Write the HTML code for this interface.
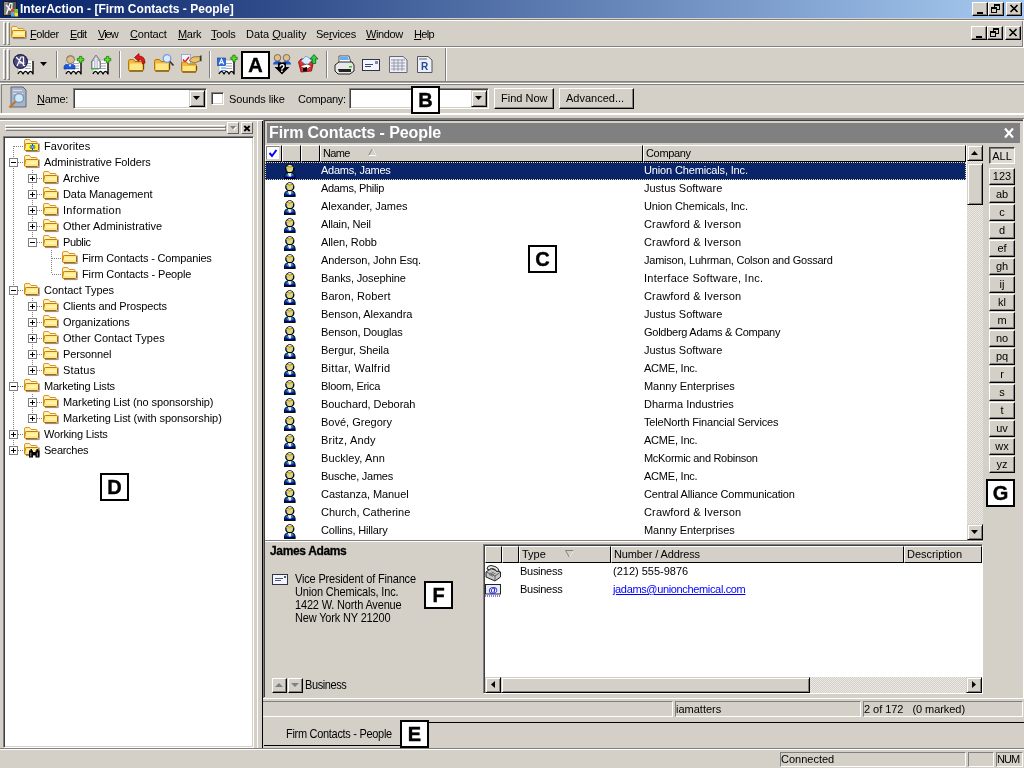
<!DOCTYPE html>
<html lang="en"><head><meta charset="utf-8"><title>InterAction - [Firm Contacts - People]</title>
<style>
*{box-sizing:border-box;margin:0;padding:0}
html,body{width:1024px;height:768px;overflow:hidden;background:#d4d0c8}
#root{position:absolute;left:0;top:0;width:1024px;height:768px;overflow:hidden;will-change:transform;opacity:0.999}
body{position:relative;font-family:"Liberation Sans",sans-serif;font-size:11px;color:#000;line-height:13px;letter-spacing:-0.1px}
.ab{position:absolute}
.t{position:absolute;white-space:nowrap;line-height:13px;height:13px}
u{text-decoration:underline}
.hl{position:absolute;height:1px}
.vl{position:absolute;width:1px}
.w{background:#fff}.g{background:#808080}.dk{background:#404040}.f{background:#d4d0c8}
.btn{position:absolute;background:#d4d0c8;border:1px solid;border-color:#fff #000 #000 #fff;box-shadow:inset -1px -1px 0 #808080}
.sbtn{position:absolute;background:#d4d0c8;border:1px solid;border-color:#d4d0c8 #000 #000 #d4d0c8;box-shadow:inset 1px 1px 0 #fff,inset -1px -1px 0 #808080}
.sunk{position:absolute;background:#fff;border:1px solid;border-color:#808080 #fff #fff #808080;box-shadow:inset 1px 1px 0 #404040,inset -1px -1px 0 #d4d0c8}
.lab{position:absolute;width:29px;height:28px;background:#fff;border:2px solid #000;font:bold 20px/25px "Liberation Sans",sans-serif;text-align:center;color:#000;letter-spacing:0;-webkit-text-stroke:0.4px #000}
.sb{position:absolute;background-color:#eae8e4;background-image:linear-gradient(45deg,#d4d0c8 25%,transparent 25%,transparent 75%,#d4d0c8 75%),linear-gradient(45deg,#d4d0c8 25%,transparent 25%,transparent 75%,#d4d0c8 75%);background-size:2px 2px;background-position:0 0,1px 1px}
.hdr{position:absolute;background:#d4d0c8;border:1px solid;border-color:#fff #000 #000 #fff;height:16px}
.ib{position:absolute;background:#d4d0c8;border:1px solid;border-color:#fff #000 #000 #fff;box-shadow:inset -1px -1px 0 #808080;width:25px;height:16px;text-align:center;font-size:11px;line-height:13px}
.st{position:absolute;border:1px solid;border-color:#808080 #fff #fff #808080;height:17px}
svg{position:absolute;overflow:visible}
</style></head>
<body><div id="root">
<div class="ab" style="left:0;top:0;width:1024px;height:18px;background:linear-gradient(90deg,#0a246a 0%,#0a246a 3%,#a6caf0 100%)"></div>
<svg style="left:3px;top:1px" width="16" height="16" viewBox="0 0 16 16"><rect x="0" y="0" width="14" height="15" fill="#1c1c1c"/><rect x="1" y="1" width="12" height="13" fill="#5a5a5a"/><rect x="1" y="1" width="4" height="13" fill="#8a8a8a"/><path d="M3.5 13 L7 2.5 L9 2.5 L8.5 13 M5 9 L10 9 M3 4 L11 12" stroke="#fff" stroke-width="1.2" fill="none"/><rect x="8" y="8" width="3.5" height="3.5" fill="#e8452c"/><rect x="11.5" y="8" width="3.5" height="3.5" fill="#6c3"/><rect x="8" y="11.5" width="3.5" height="4" fill="#4ae"/><rect x="11.5" y="11.5" width="3.5" height="4" fill="#fd3"/></svg>
<div class="t" style="left:20px;top:2px;color:#fff;font-weight:bold;font-size:12px;line-height:14px;height:14px;letter-spacing:0.027px">InterAction - [Firm Contacts - People]</div>
<div class="btn" style="left:972px;top:2px;width:16px;height:14px"><div class="ab" style="left:4px;top:9px;width:6px;height:2px;background:#000"></div></div>
<div class="btn" style="left:988px;top:2px;width:16px;height:14px"><div class="ab" style="left:5px;top:1px;width:6px;height:6px;border:1px solid #000;border-top-width:2px"></div><div class="ab" style="left:2px;top:4px;width:6px;height:6px;border:1px solid #000;border-top-width:2px;background:#d4d0c8"></div></div>
<div class="btn" style="left:1006px;top:2px;width:16px;height:14px"><svg style="left:3px;top:2px" width="8" height="7" viewBox="0 0 8 7"><path d="M0.5 0 L7.5 7 M7.5 0 L0.5 7" stroke="#000" stroke-width="1.6"/></svg></div>
<div class="hl g" style="left:0;top:19px;width:1024px"></div><div class="hl w" style="left:0;top:20px;width:1024px"></div>
<div class="hl g" style="left:0;top:46px;width:1024px"></div><div class="hl w" style="left:0;top:47px;width:1024px"></div>
<div class="ab" style="left:3px;top:22px;width:3px;height:23px;border:1px solid;border-color:#fff #808080 #808080 #fff"></div>
<div class="ab" style="left:7px;top:22px;width:3px;height:23px;border:1px solid;border-color:#fff #808080 #808080 #fff"></div>
<svg style="left:11px;top:26px" width="16" height="14" viewBox="0 0 16 14"><path d="M15.2 4.5 V12.6 H2" fill="none" stroke="#8a8a9a" stroke-width="1"/><path d="M0.5 11 V2 Q0.5 0.5 2 0.5 H5 Q6 0.5 6.5 1.5 L7 2.5 H12 Q13 2.5 13 3.5 V5 H0.5 Z" fill="#fff3c0" stroke="#dc9420" stroke-width="1"/><path d="M2.5 4.5 H13.5 Q14.5 4.5 14.5 5.5 V10.5 Q14.5 11.5 13.5 11.5 H2 Q0.5 11.5 0.5 10.5 L1.5 5.5 Q1.7 4.5 2.5 4.5 Z" fill="#ffe880" stroke="#c47c10" stroke-width="1"/><rect x="2.5" y="6.5" width="11" height="2.5" fill="#fff4b0"/><path d="M14.5 5.5 V11 M13 11.6 H2" fill="none" stroke="#a86408" stroke-width="1"/></svg>
<div class="t" style="left:30px;top:28px;;letter-spacing:-0.4px"><u>F</u>older</div>
<div class="t" style="left:70px;top:28px;;letter-spacing:-0.667px"><u>E</u>dit</div>
<div class="t" style="left:98px;top:28px;;letter-spacing:-1.0px"><u>V</u>iew</div>
<div class="t" style="left:130px;top:28px;;letter-spacing:-0.167px"><u>C</u>ontact</div>
<div class="t" style="left:178px;top:28px;;letter-spacing:-0.333px"><u>M</u>ark</div>
<div class="t" style="left:211px;top:28px;;letter-spacing:-0.25px"><u>T</u>ools</div>
<div class="t" style="left:246px;top:28px;;letter-spacing:0.0px">Data <u>Q</u>uality</div>
<div class="t" style="left:316px;top:28px;;letter-spacing:-0.286px">Se<u>r</u>vices</div>
<div class="t" style="left:366px;top:28px;;letter-spacing:-0.4px"><u>W</u>indow</div>
<div class="t" style="left:414px;top:28px;;letter-spacing:-0.667px"><u>H</u>elp</div>
<div class="btn" style="left:971px;top:26px;width:16px;height:14px"><div class="ab" style="left:4px;top:9px;width:6px;height:2px;background:#000"></div></div>
<div class="btn" style="left:987px;top:26px;width:16px;height:14px"><div class="ab" style="left:5px;top:1px;width:6px;height:6px;border:1px solid #000;border-top-width:2px"></div><div class="ab" style="left:2px;top:4px;width:6px;height:6px;border:1px solid #000;border-top-width:2px;background:#d4d0c8"></div></div>
<div class="btn" style="left:1005px;top:26px;width:16px;height:14px"><svg style="left:3px;top:2px" width="8" height="7" viewBox="0 0 8 7"><path d="M0.5 0 L7.5 7 M7.5 0 L0.5 7" stroke="#000" stroke-width="1.6"/></svg></div>
<div class="vl g" style="left:1022px;top:21px;height:25px"></div><div class="vl w" style="left:1023px;top:21px;height:26px"></div>
<div class="ab" style="left:3px;top:49px;width:3px;height:31px;border:1px solid;border-color:#fff #808080 #808080 #fff"></div>
<div class="ab" style="left:7px;top:49px;width:3px;height:31px;border:1px solid;border-color:#fff #808080 #808080 #fff"></div>
<div class="hl g" style="left:0;top:81px;width:1024px"></div><div class="hl" style="left:0;top:82px;width:1024px;background:#a8a49c"></div><div class="hl w" style="left:0;top:83px;width:1024px"></div>
<div class="vl g" style="left:445px;top:48px;height:33px"></div><div class="vl w" style="left:446px;top:48px;height:33px"></div>
<div class="vl g" style="left:56px;top:51px;height:27px"></div><div class="vl w" style="left:57px;top:51px;height:27px"></div>
<div class="vl g" style="left:119px;top:51px;height:27px"></div><div class="vl w" style="left:120px;top:51px;height:27px"></div>
<div class="vl g" style="left:209px;top:51px;height:27px"></div><div class="vl w" style="left:210px;top:51px;height:27px"></div>
<div class="vl g" style="left:326px;top:51px;height:27px"></div><div class="vl w" style="left:327px;top:51px;height:27px"></div>
<svg style="left:13px;top:54px" width="21" height="21" viewBox="0 0 21 21"><path d="M5 6 L20 6 L20 20 q-1.25 -2.6 -2.50 -2.6 q-1.25 0 -2.50 2.6 q-1.25 -2.6 -2.50 -2.6 q-1.25 0 -2.50 2.6 q-1.25 -2.6 -2.50 -2.6 q-1.25 0 -2.50 2.6 Z" fill="#fff" stroke="#b0b0b0" stroke-width="0.8"/><path d="M20 7 L20 20 q-1.25 -2.6 -2.50 -2.6 q-1.25 0 -2.50 2.6 q-1.25 -2.6 -2.50 -2.6 q-1.25 0 -2.50 2.6 q-1.25 -2.6 -2.50 -2.6 q-1.25 0 -2.50 2.6" fill="none" stroke="#000" stroke-width="1.3" stroke-linejoin="round"/><rect x="12" y="9.0" width="6" height="1" fill="#aab"/><rect x="12" y="11.5" width="6" height="1" fill="#aab"/><rect x="12" y="14.0" width="6" height="1" fill="#aab"/><circle cx="7.5" cy="7.5" r="7.5" fill="#1c1c3a"/><circle cx="7.5" cy="7.5" r="6.3" fill="#4a4a86"/><path d="M4 12 L8 3 L10.5 3 L10.5 12 M6 9 L11.5 9 M3 3 L12 12" stroke="#fff" stroke-width="1.2" fill="none"/></svg>
<svg style="left:40px;top:62px" width="8" height="4" viewBox="0 0 8 4"><path d="M0 0 L7 0 L3.5 4 Z" fill="#000"/></svg>
<svg style="left:64px;top:55px" width="21" height="20" viewBox="0 0 21 20"><path d="M2 5 L17 5 L17 19 q-1.25 -2.6 -2.50 -2.6 q-1.25 0 -2.50 2.6 q-1.25 -2.6 -2.50 -2.6 q-1.25 0 -2.50 2.6 q-1.25 -2.6 -2.50 -2.6 q-1.25 0 -2.50 2.6 Z" fill="#fff" stroke="#b0b0b0" stroke-width="0.8"/><path d="M17 6 L17 19 q-1.25 -2.6 -2.50 -2.6 q-1.25 0 -2.50 2.6 q-1.25 -2.6 -2.50 -2.6 q-1.25 0 -2.50 2.6 q-1.25 -2.6 -2.50 -2.6 q-1.25 0 -2.50 2.6" fill="none" stroke="#000" stroke-width="1.3" stroke-linejoin="round"/><rect x="9" y="8.0" width="6" height="1" fill="#aab"/><rect x="9" y="10.5" width="6" height="1" fill="#aab"/><rect x="9" y="13.0" width="6" height="1" fill="#aab"/><circle cx="6.5" cy="4.5" r="4" fill="#d8c090" stroke="#7a6a50" stroke-width="0.8"/><path d="M3 3 Q6.5 -1 10 3" fill="none" stroke="#9a8a6a" stroke-width="1.2"/><path d="M0 14 L0 12 Q0 9 6 9 Q11 9 11 12 L11 14 Z" fill="#1a5ae0" stroke="#0a2a8a" stroke-width="0.6"/><path d="M4.5 9.5 L6 12 L7.5 9.5 Z" fill="#fff"/><path d="M13.4 3.4 h2 v-2 h2.4 v2 h2 v2.4 h-2 v2 h-2.4 v-2 h-2 z" fill="#5be02a" stroke="#1a7a0a" stroke-width="0.8"/></svg>
<svg style="left:91px;top:55px" width="21" height="20" viewBox="0 0 21 20"><path d="M2 5 L17 5 L17 19 q-1.25 -2.6 -2.50 -2.6 q-1.25 0 -2.50 2.6 q-1.25 -2.6 -2.50 -2.6 q-1.25 0 -2.50 2.6 q-1.25 -2.6 -2.50 -2.6 q-1.25 0 -2.50 2.6 Z" fill="#fff" stroke="#b0b0b0" stroke-width="0.8"/><path d="M17 6 L17 19 q-1.25 -2.6 -2.50 -2.6 q-1.25 0 -2.50 2.6 q-1.25 -2.6 -2.50 -2.6 q-1.25 0 -2.50 2.6 q-1.25 -2.6 -2.50 -2.6 q-1.25 0 -2.50 2.6" fill="none" stroke="#000" stroke-width="1.3" stroke-linejoin="round"/><rect x="9" y="8.0" width="6" height="1" fill="#aab"/><rect x="9" y="10.5" width="6" height="1" fill="#aab"/><rect x="9" y="13.0" width="6" height="1" fill="#aab"/><path d="M0.5 13.5 L0.5 6 L2 6 L2 4 L5 0 L8 4 L8 6 L9.5 6 L9.5 13.5 Z" fill="#c4c4d0" stroke="#666a7a" stroke-width="0.8"/><path d="M2.5 6 v7 M5 3 v10 M7.5 6 v7" stroke="#fff" stroke-width="0.9"/><rect x="0" y="13" width="8" height="1.5" fill="#4a4"/><path d="M13.4 3.4 h2 v-2 h2.4 v2 h2 v2.4 h-2 v2 h-2.4 v-2 h-2 z" fill="#5be02a" stroke="#1a7a0a" stroke-width="0.8"/></svg>
<svg style="left:128px;top:53px" width="20" height="21" viewBox="0 0 20 21"><path d="M0.5 8.5 Q0.5 6.5 2 6.5 L5.5 6.5 L7 8.5 L14 8.5 Q15.5 8.5 15.5 10.0 L15.5 16.5 Q15.5 18.0 14 18.0 L2 18.0 Q0.5 18.0 0.5 16.5 Z" fill="#f0b840" stroke="#b87808" stroke-width="1"/><rect x="1.8" y="10.5" width="12.4" height="6.5" fill="#fde684"/><path d="M1.5 18.0 L15 18.0 M15.6 10.5 L15.6 16.5" stroke="#6a4808" stroke-width="1.1"/><path d="M6.5 4.5 L11 0.5 L11 3 Q17 3 17 10 L14.5 11 Q14.5 6.5 11 6.5 L11 8.5 Z" fill="#e01818" stroke="#800" stroke-width="0.7"/></svg>
<svg style="left:154px;top:53px" width="22" height="21" viewBox="0 0 22 21"><path d="M0.5 8.5 Q0.5 6.5 2 6.5 L5.5 6.5 L7 8.5 L14 8.5 Q15.5 8.5 15.5 10.0 L15.5 16.5 Q15.5 18.0 14 18.0 L2 18.0 Q0.5 18.0 0.5 16.5 Z" fill="#f0b840" stroke="#b87808" stroke-width="1"/><rect x="1.8" y="10.5" width="12.4" height="6.5" fill="#fde684"/><path d="M1.5 18.0 L15 18.0 M15.6 10.5 L15.6 16.5" stroke="#6a4808" stroke-width="1.1"/><circle cx="13" cy="5.5" r="3.8" fill="#d8ecff" stroke="#7a9ae0" stroke-width="1.3"/><path d="M15.8 8.5 L19.5 12.5" stroke="#333" stroke-width="1.7"/></svg>
<svg style="left:181px;top:52px" width="22" height="22" viewBox="0 0 22 22"><rect x="0.5" y="2.5" width="9" height="11" fill="#f0f4ff" stroke="#8aa0d0" stroke-width="0.8"/><path d="M2 7.5 L4 10 L8 5" stroke="#e01818" stroke-width="1.4" fill="none"/><path d="M8 8.5 L12 5 L19 4.5 L19 9 L13 11 Z" fill="#e9c46a" stroke="#7a5510" stroke-width="0.7"/><path d="M19 4 L20.5 3 L20.5 9.5 L19 9 Z" fill="#333"/><path d="M0.5 12 Q0.5 10 2 10 L5.5 10 L7 12 L14 12 Q15.5 12 15.5 13.5 L15.5 18.5 Q15.5 20.0 14 20.0 L2 20.0 Q0.5 20.0 0.5 18.5 Z" fill="#f0b840" stroke="#b87808" stroke-width="1"/><rect x="1.8" y="14" width="12.4" height="5.0" fill="#fde684"/><path d="M1.5 20.0 L15 20.0 M15.6 14 L15.6 18.5" stroke="#6a4808" stroke-width="1.1"/></svg>
<svg style="left:217px;top:54px" width="21" height="21" viewBox="0 0 21 21"><path d="M2 6 L17 6 L17 20 q-1.25 -2.6 -2.50 -2.6 q-1.25 0 -2.50 2.6 q-1.25 -2.6 -2.50 -2.6 q-1.25 0 -2.50 2.6 q-1.25 -2.6 -2.50 -2.6 q-1.25 0 -2.50 2.6 Z" fill="#fff" stroke="#b0b0b0" stroke-width="0.8"/><path d="M17 7 L17 20 q-1.25 -2.6 -2.50 -2.6 q-1.25 0 -2.50 2.6 q-1.25 -2.6 -2.50 -2.6 q-1.25 0 -2.50 2.6 q-1.25 -2.6 -2.50 -2.6 q-1.25 0 -2.50 2.6" fill="none" stroke="#000" stroke-width="1.3" stroke-linejoin="round"/><rect x="9" y="9.0" width="6" height="1" fill="#aab"/><rect x="9" y="11.5" width="6" height="1" fill="#aab"/><rect x="9" y="14.0" width="6" height="1" fill="#aab"/><rect x="0.5" y="4" width="8" height="7.5" fill="#2a6fdf" stroke="#0a3a9a" stroke-width="0.6"/><path d="M2.3 10.3 L4.5 5.2 L6.7 10.3 M3.2 8.6 L5.8 8.6" stroke="#fff" stroke-width="1.1" fill="none"/><rect x="4" y="13.5" width="5" height="1" fill="#39f"/><rect x="4" y="16" width="5" height="1" fill="#39f"/><path d="M13.8 3.2 h2 v-2 h2.4 v2 h2 v2.4 h-2 v2 h-2.4 v-2 h-2 z" fill="#5be02a" stroke="#1a7a0a" stroke-width="0.8"/></svg>
<svg style="left:273px;top:54px" width="19" height="21" viewBox="0 0 19 21"><circle cx="4.5" cy="3.8" r="3.3" fill="#e0c088" stroke="#654" stroke-width="0.8"/><circle cx="13.5" cy="3.8" r="3.3" fill="#e0c088" stroke="#654" stroke-width="0.8"/><path d="M0 10.5 Q0 7 4.5 7 Q9 7 9 10.5 Z" fill="#1a5ae0"/><path d="M9 10.5 Q9 7 13.5 7 Q18 7 18 10.5 Z" fill="#1a5ae0"/><path d="M5 8.5 L13 8.5 L13 13 L16.5 13 L9 20.5 L1.5 13 L5 13 Z" fill="#000"/><text x="9" y="17.5" font-family="Liberation Sans,sans-serif" font-size="10" font-weight="bold" fill="#fff" text-anchor="middle">?</text></svg>
<svg style="left:298px;top:54px" width="21" height="21" viewBox="0 0 21 21"><path d="M0.5 8 L3 5 L8 5 L9 7 L13 7 L15 10 L13.5 17 L3 18 Z" fill="#e03030" stroke="#800" stroke-width="0.8"/><path d="M3 7 L8 2 L14 6 L9 11.5 Z" fill="#d8ecff" stroke="#68a" stroke-width="0.7"/><path d="M2 12 L9 10 L14 12 L8 15.5 Z" fill="#fff" stroke="#600" stroke-width="0.6"/><path d="M5 14 L9 13 L9 17 L5 17.5 Z" fill="#000"/><path d="M16 0.5 L20 5 L17.7 5 L17.7 9.5 L14.3 9.5 L14.3 5 L12 5 Z" fill="#2fd02f" stroke="#063" stroke-width="0.8"/></svg>
<svg style="left:334px;top:55px" width="21" height="20" viewBox="0 0 21 20"><path d="M5 1 L15 1 L17 8 L5 8 Z" fill="#fff" stroke="#333" stroke-width="0.8"/><path d="M6 2 L14 2 L15 5 L6 5 Z" fill="#5ab0ff"/><path d="M1 10 L5 7 L18 7 L20 10 L20 16 L16 19 L4 19 L1 16 Z" fill="#e8e8e8" stroke="#222" stroke-width="1"/><path d="M4 14 L17 14 L17 17 L5 17 Z" fill="#222"/><rect x="15" y="11" width="3" height="1.5" fill="#2c2"/></svg>
<svg style="left:362px;top:59px" width="18" height="12" viewBox="0 0 18 12"><rect x="0.5" y="0.5" width="17" height="11" fill="#f4f6ff" stroke="#334" stroke-width="1"/><rect x="3" y="5" width="8" height="1" fill="#446"/><rect x="3" y="7" width="6" height="1" fill="#446"/><rect x="13" y="2" width="3" height="3" fill="#88a"/></svg>
<svg style="left:389px;top:56px" width="19" height="17" viewBox="0 0 19 17"><path d="M0.5 0.5 L14 0.5 L18 4 L18 16.5 L0.5 16.5 Z" fill="#eef0f8" stroke="#667" stroke-width="1"/><path d="M2 4 H16 M2 7 H16 M2 10 H16 M2 13 H16 M5 3 V15 M9 3 V15 M13 3 V15" stroke="#99a" stroke-width="1"/></svg>
<svg style="left:417px;top:56px" width="16" height="17" viewBox="0 0 16 17"><path d="M0.5 0.5 L11 0.5 L15 4 L15 16.5 L0.5 16.5 Z" fill="#eef0f8" stroke="#556" stroke-width="1"/><rect x="2" y="2" width="8" height="2" fill="#aab"/><text x="7.5" y="14" font-family="Liberation Sans,sans-serif" font-size="10" font-weight="bold" fill="#234a9a" text-anchor="middle">R</text></svg>
<div class="lab" style="left:241px;top:51px">A</div>
<div class="hl g" style="left:1px;top:84px;width:1023px"></div><div class="vl g" style="left:1px;top:84px;height:29px"></div>
<div class="hl w" style="left:0;top:113px;width:1024px;height:2px"></div>
<div class="hl g" style="left:0;top:118px;width:1024px"></div><div class="hl g" style="left:0;top:119px;width:263px"></div><div class="hl w" style="left:0;top:120px;width:263px"></div>
<svg style="left:8px;top:86px" width="20" height="23" viewBox="0 0 20 23"><path d="M3 1 L15 1 L18 4 L18 21 L3 21 Z" fill="#aab4c4" stroke="#5a6a84" stroke-width="1"/><rect x="5" y="4" width="9" height="1" fill="#dde"/><rect x="5" y="7" width="10" height="1" fill="#dde"/><circle cx="11" cy="12" r="4.6" fill="#cfe8f8" stroke="#7a9ab8" stroke-width="1.5"/><path d="M7.5 15.5 L1.5 21.5" stroke="#c07830" stroke-width="2.4"/></svg>
<div class="t" style="left:37px;top:93px;;letter-spacing:-0.25px"><u>N</u>ame:</div>
<div class="sunk" style="left:73px;top:88px;width:134px;height:21px"><div class="sbtn" style="right:1px;top:1px;width:16px;height:17px"><svg style="left:3px;top:5px" width="7" height="4" viewBox="0 0 7 4"><path d="M0 0 L7 0 L3.5 4 Z" fill="#000"/></svg></div></div>
<div class="sunk" style="left:211px;top:92px;width:13px;height:13px"></div>
<div class="t" style="left:229px;top:93px;;letter-spacing:-0.1px">Sounds like</div>
<div class="t" style="left:298px;top:93px;;letter-spacing:-0.286px">Company:</div>
<div class="sunk" style="left:349px;top:88px;width:140px;height:21px"><div class="sbtn" style="right:1px;top:1px;width:16px;height:17px"><svg style="left:3px;top:5px" width="7" height="4" viewBox="0 0 7 4"><path d="M0 0 L7 0 L3.5 4 Z" fill="#000"/></svg></div></div>
<div class="btn" style="left:494px;top:88px;width:60px;height:21px"></div>
<div class="t" style="left:501px;top:92px;;letter-spacing:0.0px">Find Now</div>
<div class="btn" style="left:559px;top:88px;width:75px;height:21px"></div>
<div class="t" style="left:566px;top:92px;;letter-spacing:0.0px">Advanced...</div>
<div class="lab" style="left:411px;top:86px">B</div>
<div class="ab" style="left:5px;top:125px;width:221px;height:3px;border:1px solid;border-color:#fff #808080 #808080 #fff"></div>
<div class="ab" style="left:5px;top:128px;width:221px;height:3px;border:1px solid;border-color:#fff #808080 #808080 #fff"></div>
<div class="btn" style="left:227px;top:122px;width:12px;height:12px;box-shadow:none;border-color:#fff #606060 #606060 #fff"><svg style="left:2px;top:3px" width="7" height="5" viewBox="0 0 7 5"><path d="M1 1 L7 1 L4 4.5 Z" fill="#fff"/><path d="M0 0 L6 0 L3 3.5 Z" fill="#808080"/></svg></div>
<div class="btn" style="left:241px;top:122px;width:12px;height:12px;box-shadow:none;border-color:#fff #606060 #606060 #fff"><svg style="left:2px;top:3px" width="6" height="5" viewBox="0 0 6 5"><path d="M0.3 0 L5.7 5 M5.7 0 L0.3 5" stroke="#000" stroke-width="1.9"/></svg></div>
<div class="ab" style="left:3px;top:136px;width:251px;height:612px;background:#fff;border:1px solid;border-color:#808080 #fff #fff #808080;box-shadow:inset 1px 1px 0 #404040,inset -1px -1px 0 #d4d0c8"></div>
<div class="vl w" style="left:257px;top:121px;height:627px"></div>
<div class="ab" style="left:13px;top:146px;width:1px;height:304px;background:repeating-linear-gradient(180deg,#808080 0 1px,transparent 1px 2px)"></div>
<div class="ab" style="left:32px;top:170px;width:1px;height:72px;background:repeating-linear-gradient(180deg,#808080 0 1px,transparent 1px 2px)"></div>
<div class="ab" style="left:51px;top:250px;width:1px;height:24px;background:repeating-linear-gradient(180deg,#808080 0 1px,transparent 1px 2px)"></div>
<div class="ab" style="left:32px;top:298px;width:1px;height:72px;background:repeating-linear-gradient(180deg,#808080 0 1px,transparent 1px 2px)"></div>
<div class="ab" style="left:32px;top:394px;width:1px;height:24px;background:repeating-linear-gradient(180deg,#808080 0 1px,transparent 1px 2px)"></div>
<div class="ab" style="left:14px;top:146px;width:10px;height:1px;background:repeating-linear-gradient(90deg,#808080 0 1px,transparent 1px 2px)"></div>
<svg style="left:24px;top:139px" width="16" height="14" viewBox="0 0 16 14"><path d="M15.2 4.5 V12.6 H2" fill="none" stroke="#8a8a9a" stroke-width="1"/><path d="M0.5 11 V2 Q0.5 0.5 2 0.5 H5 Q6 0.5 6.5 1.5 L7 2.5 H12 Q13 2.5 13 3.5 V5 H0.5 Z" fill="#fff3c0" stroke="#dc9420" stroke-width="1"/><path d="M2.5 4.5 H13.5 Q14.5 4.5 14.5 5.5 V10.5 Q14.5 11.5 13.5 11.5 H2 Q0.5 11.5 0.5 10.5 L1.5 5.5 Q1.7 4.5 2.5 4.5 Z" fill="#ffe880" stroke="#c47c10" stroke-width="1"/><rect x="2.5" y="6.5" width="11" height="2.5" fill="#fff4b0"/><path d="M14.5 5.5 V11 M13 11.6 H2" fill="none" stroke="#a86408" stroke-width="1"/><rect x="4" y="5.5" width="9" height="5.5" fill="#ff0"/><path d="M8.5 5 V11 M5.5 8 H11.5 M6.5 6 L10.5 10 M10.5 6 L6.5 10" stroke="#04f" stroke-width="1"/><circle cx="8.5" cy="8" r="0.8" fill="#cff"/></svg>
<div class="t" style="left:44px;top:140px;;letter-spacing:0.125px">Favorites</div>
<div class="ab" style="left:14px;top:162px;width:10px;height:1px;background:repeating-linear-gradient(90deg,#808080 0 1px,transparent 1px 2px)"></div>
<div class="ab" style="left:9px;top:158px;width:9px;height:9px;border:1px solid #808080;background:#fff"><div class="ab" style="left:1px;top:3px;width:5px;height:1px;background:#000"></div></div>
<svg style="left:24px;top:155px" width="16" height="14" viewBox="0 0 16 14"><path d="M15.2 4.5 V12.6 H2" fill="none" stroke="#8a8a9a" stroke-width="1"/><path d="M0.5 11 V2 Q0.5 0.5 2 0.5 H5 Q6 0.5 6.5 1.5 L7 2.5 H12 Q13 2.5 13 3.5 V5 H0.5 Z" fill="#fff3c0" stroke="#dc9420" stroke-width="1"/><path d="M2.5 4.5 H13.5 Q14.5 4.5 14.5 5.5 V10.5 Q14.5 11.5 13.5 11.5 H2 Q0.5 11.5 0.5 10.5 L1.5 5.5 Q1.7 4.5 2.5 4.5 Z" fill="#ffe880" stroke="#c47c10" stroke-width="1"/><rect x="2.5" y="6.5" width="11" height="2.5" fill="#fff4b0"/><path d="M14.5 5.5 V11 M13 11.6 H2" fill="none" stroke="#a86408" stroke-width="1"/></svg>
<div class="t" style="left:44px;top:156px;;letter-spacing:-0.095px">Administrative Folders</div>
<div class="ab" style="left:33px;top:178px;width:10px;height:1px;background:repeating-linear-gradient(90deg,#808080 0 1px,transparent 1px 2px)"></div>
<div class="ab" style="left:28px;top:174px;width:9px;height:9px;border:1px solid #808080;background:#fff"><div class="ab" style="left:1px;top:3px;width:5px;height:1px;background:#000"></div><div class="ab" style="left:3px;top:1px;width:1px;height:5px;background:#000"></div></div>
<svg style="left:43px;top:171px" width="16" height="14" viewBox="0 0 16 14"><path d="M15.2 4.5 V12.6 H2" fill="none" stroke="#8a8a9a" stroke-width="1"/><path d="M0.5 11 V2 Q0.5 0.5 2 0.5 H5 Q6 0.5 6.5 1.5 L7 2.5 H12 Q13 2.5 13 3.5 V5 H0.5 Z" fill="#fff3c0" stroke="#dc9420" stroke-width="1"/><path d="M2.5 4.5 H13.5 Q14.5 4.5 14.5 5.5 V10.5 Q14.5 11.5 13.5 11.5 H2 Q0.5 11.5 0.5 10.5 L1.5 5.5 Q1.7 4.5 2.5 4.5 Z" fill="#ffe880" stroke="#c47c10" stroke-width="1"/><rect x="2.5" y="6.5" width="11" height="2.5" fill="#fff4b0"/><path d="M14.5 5.5 V11 M13 11.6 H2" fill="none" stroke="#a86408" stroke-width="1"/></svg>
<div class="t" style="left:63px;top:172px;;letter-spacing:0.0px">Archive</div>
<div class="ab" style="left:33px;top:194px;width:10px;height:1px;background:repeating-linear-gradient(90deg,#808080 0 1px,transparent 1px 2px)"></div>
<div class="ab" style="left:28px;top:190px;width:9px;height:9px;border:1px solid #808080;background:#fff"><div class="ab" style="left:1px;top:3px;width:5px;height:1px;background:#000"></div><div class="ab" style="left:3px;top:1px;width:1px;height:5px;background:#000"></div></div>
<svg style="left:43px;top:187px" width="16" height="14" viewBox="0 0 16 14"><path d="M15.2 4.5 V12.6 H2" fill="none" stroke="#8a8a9a" stroke-width="1"/><path d="M0.5 11 V2 Q0.5 0.5 2 0.5 H5 Q6 0.5 6.5 1.5 L7 2.5 H12 Q13 2.5 13 3.5 V5 H0.5 Z" fill="#fff3c0" stroke="#dc9420" stroke-width="1"/><path d="M2.5 4.5 H13.5 Q14.5 4.5 14.5 5.5 V10.5 Q14.5 11.5 13.5 11.5 H2 Q0.5 11.5 0.5 10.5 L1.5 5.5 Q1.7 4.5 2.5 4.5 Z" fill="#ffe880" stroke="#c47c10" stroke-width="1"/><rect x="2.5" y="6.5" width="11" height="2.5" fill="#fff4b0"/><path d="M14.5 5.5 V11 M13 11.6 H2" fill="none" stroke="#a86408" stroke-width="1"/></svg>
<div class="t" style="left:63px;top:188px;;letter-spacing:-0.071px">Data Management</div>
<div class="ab" style="left:33px;top:210px;width:10px;height:1px;background:repeating-linear-gradient(90deg,#808080 0 1px,transparent 1px 2px)"></div>
<div class="ab" style="left:28px;top:206px;width:9px;height:9px;border:1px solid #808080;background:#fff"><div class="ab" style="left:1px;top:3px;width:5px;height:1px;background:#000"></div><div class="ab" style="left:3px;top:1px;width:1px;height:5px;background:#000"></div></div>
<svg style="left:43px;top:203px" width="16" height="14" viewBox="0 0 16 14"><path d="M15.2 4.5 V12.6 H2" fill="none" stroke="#8a8a9a" stroke-width="1"/><path d="M0.5 11 V2 Q0.5 0.5 2 0.5 H5 Q6 0.5 6.5 1.5 L7 2.5 H12 Q13 2.5 13 3.5 V5 H0.5 Z" fill="#fff3c0" stroke="#dc9420" stroke-width="1"/><path d="M2.5 4.5 H13.5 Q14.5 4.5 14.5 5.5 V10.5 Q14.5 11.5 13.5 11.5 H2 Q0.5 11.5 0.5 10.5 L1.5 5.5 Q1.7 4.5 2.5 4.5 Z" fill="#ffe880" stroke="#c47c10" stroke-width="1"/><rect x="2.5" y="6.5" width="11" height="2.5" fill="#fff4b0"/><path d="M14.5 5.5 V11 M13 11.6 H2" fill="none" stroke="#a86408" stroke-width="1"/></svg>
<div class="t" style="left:63px;top:204px;;letter-spacing:0.3px">Information</div>
<div class="ab" style="left:33px;top:226px;width:10px;height:1px;background:repeating-linear-gradient(90deg,#808080 0 1px,transparent 1px 2px)"></div>
<div class="ab" style="left:28px;top:222px;width:9px;height:9px;border:1px solid #808080;background:#fff"><div class="ab" style="left:1px;top:3px;width:5px;height:1px;background:#000"></div><div class="ab" style="left:3px;top:1px;width:1px;height:5px;background:#000"></div></div>
<svg style="left:43px;top:219px" width="16" height="14" viewBox="0 0 16 14"><path d="M15.2 4.5 V12.6 H2" fill="none" stroke="#8a8a9a" stroke-width="1"/><path d="M0.5 11 V2 Q0.5 0.5 2 0.5 H5 Q6 0.5 6.5 1.5 L7 2.5 H12 Q13 2.5 13 3.5 V5 H0.5 Z" fill="#fff3c0" stroke="#dc9420" stroke-width="1"/><path d="M2.5 4.5 H13.5 Q14.5 4.5 14.5 5.5 V10.5 Q14.5 11.5 13.5 11.5 H2 Q0.5 11.5 0.5 10.5 L1.5 5.5 Q1.7 4.5 2.5 4.5 Z" fill="#ffe880" stroke="#c47c10" stroke-width="1"/><rect x="2.5" y="6.5" width="11" height="2.5" fill="#fff4b0"/><path d="M14.5 5.5 V11 M13 11.6 H2" fill="none" stroke="#a86408" stroke-width="1"/></svg>
<div class="t" style="left:63px;top:220px;;letter-spacing:0.0px">Other Administrative</div>
<div class="ab" style="left:33px;top:242px;width:10px;height:1px;background:repeating-linear-gradient(90deg,#808080 0 1px,transparent 1px 2px)"></div>
<div class="ab" style="left:28px;top:238px;width:9px;height:9px;border:1px solid #808080;background:#fff"><div class="ab" style="left:1px;top:3px;width:5px;height:1px;background:#000"></div></div>
<svg style="left:43px;top:235px" width="16" height="14" viewBox="0 0 16 14"><path d="M15.2 4.5 V12.6 H2" fill="none" stroke="#8a8a9a" stroke-width="1"/><path d="M0.5 11 V2 Q0.5 0.5 2 0.5 H5 Q6 0.5 6.5 1.5 L7 2.5 H12 Q13 2.5 13 3.5 V5 H0.5 Z" fill="#fff3c0" stroke="#dc9420" stroke-width="1"/><path d="M2.5 4.5 H13.5 Q14.5 4.5 14.5 5.5 V10.5 Q14.5 11.5 13.5 11.5 H2 Q0.5 11.5 0.5 10.5 L1.5 5.5 Q1.7 4.5 2.5 4.5 Z" fill="#ffe880" stroke="#c47c10" stroke-width="1"/><rect x="2.5" y="6.5" width="11" height="2.5" fill="#fff4b0"/><path d="M14.5 5.5 V11 M13 11.6 H2" fill="none" stroke="#a86408" stroke-width="1"/></svg>
<div class="t" style="left:63px;top:236px;;letter-spacing:-0.4px">Public</div>
<div class="ab" style="left:52px;top:258px;width:10px;height:1px;background:repeating-linear-gradient(90deg,#808080 0 1px,transparent 1px 2px)"></div>
<svg style="left:62px;top:251px" width="16" height="14" viewBox="0 0 16 14"><path d="M15.2 4.5 V12.6 H2" fill="none" stroke="#8a8a9a" stroke-width="1"/><path d="M0.5 11 V2 Q0.5 0.5 2 0.5 H5 Q6 0.5 6.5 1.5 L7 2.5 H12 Q13 2.5 13 3.5 V5 H0.5 Z" fill="#fff3c0" stroke="#dc9420" stroke-width="1"/><path d="M2.5 4.5 H13.5 Q14.5 4.5 14.5 5.5 V10.5 Q14.5 11.5 13.5 11.5 H2 Q0.5 11.5 0.5 10.5 L1.5 5.5 Q1.7 4.5 2.5 4.5 Z" fill="#ffe880" stroke="#c47c10" stroke-width="1"/><rect x="2.5" y="6.5" width="11" height="2.5" fill="#fff4b0"/><path d="M14.5 5.5 V11 M13 11.6 H2" fill="none" stroke="#a86408" stroke-width="1"/></svg>
<div class="t" style="left:82px;top:252px;;letter-spacing:-0.167px">Firm Contacts - Companies</div>
<div class="ab" style="left:52px;top:274px;width:10px;height:1px;background:repeating-linear-gradient(90deg,#808080 0 1px,transparent 1px 2px)"></div>
<svg style="left:62px;top:267px" width="16" height="14" viewBox="0 0 16 14"><path d="M15.2 4.5 V12.6 H2" fill="none" stroke="#8a8a9a" stroke-width="1"/><path d="M0.5 11 V2 Q0.5 0.5 2 0.5 H5 Q6 0.5 6.5 1.5 L7 2.5 H12 Q13 2.5 13 3.5 V5 H0.5 Z" fill="#fff3c0" stroke="#dc9420" stroke-width="1"/><path d="M2.5 4.5 H13.5 Q14.5 4.5 14.5 5.5 V10.5 Q14.5 11.5 13.5 11.5 H2 Q0.5 11.5 0.5 10.5 L1.5 5.5 Q1.7 4.5 2.5 4.5 Z" fill="#ffe880" stroke="#c47c10" stroke-width="1"/><rect x="2.5" y="6.5" width="11" height="2.5" fill="#fff4b0"/><path d="M14.5 5.5 V11 M13 11.6 H2" fill="none" stroke="#a86408" stroke-width="1"/></svg>
<div class="t" style="left:82px;top:268px;;letter-spacing:-0.143px">Firm Contacts - People</div>
<div class="ab" style="left:14px;top:290px;width:10px;height:1px;background:repeating-linear-gradient(90deg,#808080 0 1px,transparent 1px 2px)"></div>
<div class="ab" style="left:9px;top:286px;width:9px;height:9px;border:1px solid #808080;background:#fff"><div class="ab" style="left:1px;top:3px;width:5px;height:1px;background:#000"></div></div>
<svg style="left:24px;top:283px" width="16" height="14" viewBox="0 0 16 14"><path d="M15.2 4.5 V12.6 H2" fill="none" stroke="#8a8a9a" stroke-width="1"/><path d="M0.5 11 V2 Q0.5 0.5 2 0.5 H5 Q6 0.5 6.5 1.5 L7 2.5 H12 Q13 2.5 13 3.5 V5 H0.5 Z" fill="#fff3c0" stroke="#dc9420" stroke-width="1"/><path d="M2.5 4.5 H13.5 Q14.5 4.5 14.5 5.5 V10.5 Q14.5 11.5 13.5 11.5 H2 Q0.5 11.5 0.5 10.5 L1.5 5.5 Q1.7 4.5 2.5 4.5 Z" fill="#ffe880" stroke="#c47c10" stroke-width="1"/><rect x="2.5" y="6.5" width="11" height="2.5" fill="#fff4b0"/><path d="M14.5 5.5 V11 M13 11.6 H2" fill="none" stroke="#a86408" stroke-width="1"/></svg>
<div class="t" style="left:44px;top:284px;;letter-spacing:0.0px">Contact Types</div>
<div class="ab" style="left:33px;top:306px;width:10px;height:1px;background:repeating-linear-gradient(90deg,#808080 0 1px,transparent 1px 2px)"></div>
<div class="ab" style="left:28px;top:302px;width:9px;height:9px;border:1px solid #808080;background:#fff"><div class="ab" style="left:1px;top:3px;width:5px;height:1px;background:#000"></div><div class="ab" style="left:3px;top:1px;width:1px;height:5px;background:#000"></div></div>
<svg style="left:43px;top:299px" width="16" height="14" viewBox="0 0 16 14"><path d="M15.2 4.5 V12.6 H2" fill="none" stroke="#8a8a9a" stroke-width="1"/><path d="M0.5 11 V2 Q0.5 0.5 2 0.5 H5 Q6 0.5 6.5 1.5 L7 2.5 H12 Q13 2.5 13 3.5 V5 H0.5 Z" fill="#fff3c0" stroke="#dc9420" stroke-width="1"/><path d="M2.5 4.5 H13.5 Q14.5 4.5 14.5 5.5 V10.5 Q14.5 11.5 13.5 11.5 H2 Q0.5 11.5 0.5 10.5 L1.5 5.5 Q1.7 4.5 2.5 4.5 Z" fill="#ffe880" stroke="#c47c10" stroke-width="1"/><rect x="2.5" y="6.5" width="11" height="2.5" fill="#fff4b0"/><path d="M14.5 5.5 V11 M13 11.6 H2" fill="none" stroke="#a86408" stroke-width="1"/></svg>
<div class="t" style="left:63px;top:300px;;letter-spacing:-0.15px">Clients and Prospects</div>
<div class="ab" style="left:33px;top:322px;width:10px;height:1px;background:repeating-linear-gradient(90deg,#808080 0 1px,transparent 1px 2px)"></div>
<div class="ab" style="left:28px;top:318px;width:9px;height:9px;border:1px solid #808080;background:#fff"><div class="ab" style="left:1px;top:3px;width:5px;height:1px;background:#000"></div><div class="ab" style="left:3px;top:1px;width:1px;height:5px;background:#000"></div></div>
<svg style="left:43px;top:315px" width="16" height="14" viewBox="0 0 16 14"><path d="M15.2 4.5 V12.6 H2" fill="none" stroke="#8a8a9a" stroke-width="1"/><path d="M0.5 11 V2 Q0.5 0.5 2 0.5 H5 Q6 0.5 6.5 1.5 L7 2.5 H12 Q13 2.5 13 3.5 V5 H0.5 Z" fill="#fff3c0" stroke="#dc9420" stroke-width="1"/><path d="M2.5 4.5 H13.5 Q14.5 4.5 14.5 5.5 V10.5 Q14.5 11.5 13.5 11.5 H2 Q0.5 11.5 0.5 10.5 L1.5 5.5 Q1.7 4.5 2.5 4.5 Z" fill="#ffe880" stroke="#c47c10" stroke-width="1"/><rect x="2.5" y="6.5" width="11" height="2.5" fill="#fff4b0"/><path d="M14.5 5.5 V11 M13 11.6 H2" fill="none" stroke="#a86408" stroke-width="1"/></svg>
<div class="t" style="left:63px;top:316px;;letter-spacing:-0.083px">Organizations</div>
<div class="ab" style="left:33px;top:338px;width:10px;height:1px;background:repeating-linear-gradient(90deg,#808080 0 1px,transparent 1px 2px)"></div>
<div class="ab" style="left:28px;top:334px;width:9px;height:9px;border:1px solid #808080;background:#fff"><div class="ab" style="left:1px;top:3px;width:5px;height:1px;background:#000"></div><div class="ab" style="left:3px;top:1px;width:1px;height:5px;background:#000"></div></div>
<svg style="left:43px;top:331px" width="16" height="14" viewBox="0 0 16 14"><path d="M15.2 4.5 V12.6 H2" fill="none" stroke="#8a8a9a" stroke-width="1"/><path d="M0.5 11 V2 Q0.5 0.5 2 0.5 H5 Q6 0.5 6.5 1.5 L7 2.5 H12 Q13 2.5 13 3.5 V5 H0.5 Z" fill="#fff3c0" stroke="#dc9420" stroke-width="1"/><path d="M2.5 4.5 H13.5 Q14.5 4.5 14.5 5.5 V10.5 Q14.5 11.5 13.5 11.5 H2 Q0.5 11.5 0.5 10.5 L1.5 5.5 Q1.7 4.5 2.5 4.5 Z" fill="#ffe880" stroke="#c47c10" stroke-width="1"/><rect x="2.5" y="6.5" width="11" height="2.5" fill="#fff4b0"/><path d="M14.5 5.5 V11 M13 11.6 H2" fill="none" stroke="#a86408" stroke-width="1"/></svg>
<div class="t" style="left:63px;top:332px;;letter-spacing:0.056px">Other Contact Types</div>
<div class="ab" style="left:33px;top:354px;width:10px;height:1px;background:repeating-linear-gradient(90deg,#808080 0 1px,transparent 1px 2px)"></div>
<div class="ab" style="left:28px;top:350px;width:9px;height:9px;border:1px solid #808080;background:#fff"><div class="ab" style="left:1px;top:3px;width:5px;height:1px;background:#000"></div><div class="ab" style="left:3px;top:1px;width:1px;height:5px;background:#000"></div></div>
<svg style="left:43px;top:347px" width="16" height="14" viewBox="0 0 16 14"><path d="M15.2 4.5 V12.6 H2" fill="none" stroke="#8a8a9a" stroke-width="1"/><path d="M0.5 11 V2 Q0.5 0.5 2 0.5 H5 Q6 0.5 6.5 1.5 L7 2.5 H12 Q13 2.5 13 3.5 V5 H0.5 Z" fill="#fff3c0" stroke="#dc9420" stroke-width="1"/><path d="M2.5 4.5 H13.5 Q14.5 4.5 14.5 5.5 V10.5 Q14.5 11.5 13.5 11.5 H2 Q0.5 11.5 0.5 10.5 L1.5 5.5 Q1.7 4.5 2.5 4.5 Z" fill="#ffe880" stroke="#c47c10" stroke-width="1"/><rect x="2.5" y="6.5" width="11" height="2.5" fill="#fff4b0"/><path d="M14.5 5.5 V11 M13 11.6 H2" fill="none" stroke="#a86408" stroke-width="1"/></svg>
<div class="t" style="left:63px;top:348px;;letter-spacing:-0.125px">Personnel</div>
<div class="ab" style="left:33px;top:370px;width:10px;height:1px;background:repeating-linear-gradient(90deg,#808080 0 1px,transparent 1px 2px)"></div>
<div class="ab" style="left:28px;top:366px;width:9px;height:9px;border:1px solid #808080;background:#fff"><div class="ab" style="left:1px;top:3px;width:5px;height:1px;background:#000"></div><div class="ab" style="left:3px;top:1px;width:1px;height:5px;background:#000"></div></div>
<svg style="left:43px;top:363px" width="16" height="14" viewBox="0 0 16 14"><path d="M15.2 4.5 V12.6 H2" fill="none" stroke="#8a8a9a" stroke-width="1"/><path d="M0.5 11 V2 Q0.5 0.5 2 0.5 H5 Q6 0.5 6.5 1.5 L7 2.5 H12 Q13 2.5 13 3.5 V5 H0.5 Z" fill="#fff3c0" stroke="#dc9420" stroke-width="1"/><path d="M2.5 4.5 H13.5 Q14.5 4.5 14.5 5.5 V10.5 Q14.5 11.5 13.5 11.5 H2 Q0.5 11.5 0.5 10.5 L1.5 5.5 Q1.7 4.5 2.5 4.5 Z" fill="#ffe880" stroke="#c47c10" stroke-width="1"/><rect x="2.5" y="6.5" width="11" height="2.5" fill="#fff4b0"/><path d="M14.5 5.5 V11 M13 11.6 H2" fill="none" stroke="#a86408" stroke-width="1"/></svg>
<div class="t" style="left:63px;top:364px;;letter-spacing:0.2px">Status</div>
<div class="ab" style="left:14px;top:386px;width:10px;height:1px;background:repeating-linear-gradient(90deg,#808080 0 1px,transparent 1px 2px)"></div>
<div class="ab" style="left:9px;top:382px;width:9px;height:9px;border:1px solid #808080;background:#fff"><div class="ab" style="left:1px;top:3px;width:5px;height:1px;background:#000"></div></div>
<svg style="left:24px;top:379px" width="16" height="14" viewBox="0 0 16 14"><path d="M15.2 4.5 V12.6 H2" fill="none" stroke="#8a8a9a" stroke-width="1"/><path d="M0.5 11 V2 Q0.5 0.5 2 0.5 H5 Q6 0.5 6.5 1.5 L7 2.5 H12 Q13 2.5 13 3.5 V5 H0.5 Z" fill="#fff3c0" stroke="#dc9420" stroke-width="1"/><path d="M2.5 4.5 H13.5 Q14.5 4.5 14.5 5.5 V10.5 Q14.5 11.5 13.5 11.5 H2 Q0.5 11.5 0.5 10.5 L1.5 5.5 Q1.7 4.5 2.5 4.5 Z" fill="#ffe880" stroke="#c47c10" stroke-width="1"/><rect x="2.5" y="6.5" width="11" height="2.5" fill="#fff4b0"/><path d="M14.5 5.5 V11 M13 11.6 H2" fill="none" stroke="#a86408" stroke-width="1"/></svg>
<div class="t" style="left:44px;top:380px;;letter-spacing:-0.214px">Marketing Lists</div>
<div class="ab" style="left:33px;top:402px;width:10px;height:1px;background:repeating-linear-gradient(90deg,#808080 0 1px,transparent 1px 2px)"></div>
<div class="ab" style="left:28px;top:398px;width:9px;height:9px;border:1px solid #808080;background:#fff"><div class="ab" style="left:1px;top:3px;width:5px;height:1px;background:#000"></div><div class="ab" style="left:3px;top:1px;width:1px;height:5px;background:#000"></div></div>
<svg style="left:43px;top:395px" width="16" height="14" viewBox="0 0 16 14"><path d="M15.2 4.5 V12.6 H2" fill="none" stroke="#8a8a9a" stroke-width="1"/><path d="M0.5 11 V2 Q0.5 0.5 2 0.5 H5 Q6 0.5 6.5 1.5 L7 2.5 H12 Q13 2.5 13 3.5 V5 H0.5 Z" fill="#fff3c0" stroke="#dc9420" stroke-width="1"/><path d="M2.5 4.5 H13.5 Q14.5 4.5 14.5 5.5 V10.5 Q14.5 11.5 13.5 11.5 H2 Q0.5 11.5 0.5 10.5 L1.5 5.5 Q1.7 4.5 2.5 4.5 Z" fill="#ffe880" stroke="#c47c10" stroke-width="1"/><rect x="2.5" y="6.5" width="11" height="2.5" fill="#fff4b0"/><path d="M14.5 5.5 V11 M13 11.6 H2" fill="none" stroke="#a86408" stroke-width="1"/></svg>
<div class="t" style="left:63px;top:396px;;letter-spacing:-0.1px">Marketing List (no sponsorship)</div>
<div class="ab" style="left:33px;top:418px;width:10px;height:1px;background:repeating-linear-gradient(90deg,#808080 0 1px,transparent 1px 2px)"></div>
<div class="ab" style="left:28px;top:414px;width:9px;height:9px;border:1px solid #808080;background:#fff"><div class="ab" style="left:1px;top:3px;width:5px;height:1px;background:#000"></div><div class="ab" style="left:3px;top:1px;width:1px;height:5px;background:#000"></div></div>
<svg style="left:43px;top:411px" width="16" height="14" viewBox="0 0 16 14"><path d="M15.2 4.5 V12.6 H2" fill="none" stroke="#8a8a9a" stroke-width="1"/><path d="M0.5 11 V2 Q0.5 0.5 2 0.5 H5 Q6 0.5 6.5 1.5 L7 2.5 H12 Q13 2.5 13 3.5 V5 H0.5 Z" fill="#fff3c0" stroke="#dc9420" stroke-width="1"/><path d="M2.5 4.5 H13.5 Q14.5 4.5 14.5 5.5 V10.5 Q14.5 11.5 13.5 11.5 H2 Q0.5 11.5 0.5 10.5 L1.5 5.5 Q1.7 4.5 2.5 4.5 Z" fill="#ffe880" stroke="#c47c10" stroke-width="1"/><rect x="2.5" y="6.5" width="11" height="2.5" fill="#fff4b0"/><path d="M14.5 5.5 V11 M13 11.6 H2" fill="none" stroke="#a86408" stroke-width="1"/></svg>
<div class="t" style="left:63px;top:412px;;letter-spacing:-0.062px">Marketing List (with sponsorship)</div>
<div class="ab" style="left:14px;top:434px;width:10px;height:1px;background:repeating-linear-gradient(90deg,#808080 0 1px,transparent 1px 2px)"></div>
<div class="ab" style="left:9px;top:430px;width:9px;height:9px;border:1px solid #808080;background:#fff"><div class="ab" style="left:1px;top:3px;width:5px;height:1px;background:#000"></div><div class="ab" style="left:3px;top:1px;width:1px;height:5px;background:#000"></div></div>
<svg style="left:24px;top:427px" width="16" height="14" viewBox="0 0 16 14"><path d="M15.2 4.5 V12.6 H2" fill="none" stroke="#8a8a9a" stroke-width="1"/><path d="M0.5 11 V2 Q0.5 0.5 2 0.5 H5 Q6 0.5 6.5 1.5 L7 2.5 H12 Q13 2.5 13 3.5 V5 H0.5 Z" fill="#fff3c0" stroke="#dc9420" stroke-width="1"/><path d="M2.5 4.5 H13.5 Q14.5 4.5 14.5 5.5 V10.5 Q14.5 11.5 13.5 11.5 H2 Q0.5 11.5 0.5 10.5 L1.5 5.5 Q1.7 4.5 2.5 4.5 Z" fill="#ffe880" stroke="#c47c10" stroke-width="1"/><rect x="2.5" y="6.5" width="11" height="2.5" fill="#fff4b0"/><path d="M14.5 5.5 V11 M13 11.6 H2" fill="none" stroke="#a86408" stroke-width="1"/></svg>
<div class="t" style="left:44px;top:428px;;letter-spacing:-0.167px">Working Lists</div>
<div class="ab" style="left:14px;top:450px;width:10px;height:1px;background:repeating-linear-gradient(90deg,#808080 0 1px,transparent 1px 2px)"></div>
<div class="ab" style="left:9px;top:446px;width:9px;height:9px;border:1px solid #808080;background:#fff"><div class="ab" style="left:1px;top:3px;width:5px;height:1px;background:#000"></div><div class="ab" style="left:3px;top:1px;width:1px;height:5px;background:#000"></div></div>
<svg style="left:24px;top:443px" width="16" height="14" viewBox="0 0 16 14"><path d="M15.2 4.5 V12.6 H2" fill="none" stroke="#8a8a9a" stroke-width="1"/><path d="M0.5 11 V2 Q0.5 0.5 2 0.5 H5 Q6 0.5 6.5 1.5 L7 2.5 H12 Q13 2.5 13 3.5 V5 H0.5 Z" fill="#fff3c0" stroke="#dc9420" stroke-width="1"/><path d="M2.5 4.5 H13.5 Q14.5 4.5 14.5 5.5 V10.5 Q14.5 11.5 13.5 11.5 H2 Q0.5 11.5 0.5 10.5 L1.5 5.5 Q1.7 4.5 2.5 4.5 Z" fill="#ffe880" stroke="#c47c10" stroke-width="1"/><rect x="2.5" y="6.5" width="11" height="2.5" fill="#fff4b0"/><path d="M14.5 5.5 V11 M13 11.6 H2" fill="none" stroke="#a86408" stroke-width="1"/><path d="M5 7.5 h4 v7 h-4 z M11.5 7.5 h4 v7 h-4 z M8 9 h4.5 v3 h-4.5 z M6.5 6 h1.5 v2 h-1.5 z M12.5 6 h1.5 v2 h-1.5 z" fill="#000"/><path d="M6.8 9.5 v4 M13.3 9.5 v4" stroke="#999" stroke-width="1"/></svg>
<div class="t" style="left:44px;top:444px;;letter-spacing:-0.286px">Searches</div>
<div class="lab" style="left:100px;top:473px">D</div>
<div class="hl g" style="left:263px;top:119px;width:761px"></div><div class="hl dk" style="left:264px;top:120px;width:759px"></div><div class="vl w" style="left:1023px;top:119px;height:580px;width:1px"></div>
<div class="vl" style="left:262px;top:121px;height:627px;width:1px;background:#000"></div><div class="vl g" style="left:263px;top:119px;height:579px"></div><div class="vl dk" style="left:264px;top:120px;height:577px"></div>
<div class="ab" style="left:267px;top:123px;width:753px;height:20px;background:#808080"></div>
<div class="t" style="left:269px;top:124px;color:#fff;font-weight:bold;font-size:16px;line-height:18px;height:18px;letter-spacing:-0.1px">Firm Contacts - People</div>
<svg style="left:1004px;top:128px" width="10" height="10" viewBox="0 0 10 10"><path d="M1 0.5 L9 9.5 M9 0.5 L1 9.5" stroke="#fff" stroke-width="2.2"/></svg>
<div class="ab w" style="left:265px;top:145px;width:702px;height:395px"></div>
<div class="hl g" style="left:265px;top:540px;width:718px"></div><div class="hl w" style="left:265px;top:541px;width:718px"></div>
<div class="hdr" style="left:265px;top:145px;width:17px;height:17px"></div>
<div class="hdr" style="left:282px;top:145px;width:19px;height:17px"></div>
<div class="hdr" style="left:301px;top:145px;width:19px;height:17px"></div>
<div class="hdr" style="left:320px;top:145px;width:323px;height:17px"></div>
<div class="t" style="left:323px;top:147px;;letter-spacing:-0.667px">Name</div>
<div class="hdr" style="left:643px;top:145px;width:323px;height:17px"></div>
<div class="t" style="left:646px;top:147px;;letter-spacing:-0.333px">Company</div>
<div class="ab" style="left:266px;top:146px;width:14px;height:14px;background:#fff;border:1px solid;border-color:#808080 #d4d0c8 #d4d0c8 #808080"></div>
<svg style="left:269px;top:149px" width="9" height="9" viewBox="0 0 9 9"><path d="M0.5 4 L3 7 L7.5 1" stroke="#00f" stroke-width="2" fill="none"/></svg>
<svg style="left:368px;top:148px" width="9" height="8" viewBox="0 0 9 8"><path d="M4.5 0.5 L0.5 7.5 L8.5 7.5 Z" fill="#d4d0c8" stroke="#808080" stroke-width="1"/><path d="M4.5 0.5 L8.5 7.5 L0.5 7.5" fill="none" stroke="#fff" stroke-width="1"/></svg>
<div class="ab" style="left:265px;top:162px;width:701px;height:18px;background:#0a246a;outline:1px dotted #e8d8a0;outline-offset:-1px"></div>
<svg style="left:284px;top:164px" width="12" height="15" viewBox="0 0 12 16" preserveAspectRatio="none"><path d="M0.5 14.2 L0.5 12.5 Q0.8 10 3.3 9.5 L8.2 9.5 Q10.7 10 11 12.5 L11 14.2 Z" fill="#1838a8" stroke="#000" stroke-width="0.9"/><path d="M4 9.6 L7.5 9.6 L6.9 13.6 L4.6 13.6 Z" fill="#fff"/><path d="M2.6 10.6 L4.4 13.2 M8.9 10.6 L7.1 13.2" stroke="#18a0a0" stroke-width="1.2" fill="none"/><rect x="0" y="13.6" width="11.6" height="1.4" fill="#000080"/><rect x="0" y="15" width="11.6" height="1" fill="#000"/><circle cx="5.8" cy="5.2" r="4" fill="#c6c6c6" stroke="#000" stroke-width="1.3"/><ellipse cx="5.8" cy="1.9" rx="2.4" ry="1.2" fill="#fff" stroke="#000" stroke-width="0.7"/><path d="M2.3 3.6 Q5.8 2.6 9.3 3.6" stroke="#e8d820" stroke-width="1.2" fill="none"/><path d="M4 5.8 L5.5 7.6 L8 4.4" stroke="#f4e820" stroke-width="1.1" fill="none"/></svg>
<div class="t" style="left:321px;top:164px;color:#fff;letter-spacing:-0.273px">Adams, James</div>
<div class="t" style="left:644px;top:164px;color:#fff;letter-spacing:-0.15px">Union Chemicals, Inc.</div>
<svg style="left:284px;top:182px" width="12" height="15" viewBox="0 0 12 16" preserveAspectRatio="none"><path d="M0.5 14.2 L0.5 12.5 Q0.8 10 3.3 9.5 L8.2 9.5 Q10.7 10 11 12.5 L11 14.2 Z" fill="#1838a8" stroke="#000" stroke-width="0.9"/><path d="M4 9.6 L7.5 9.6 L6.9 13.6 L4.6 13.6 Z" fill="#fff"/><path d="M2.6 10.6 L4.4 13.2 M8.9 10.6 L7.1 13.2" stroke="#18a0a0" stroke-width="1.2" fill="none"/><rect x="0" y="13.6" width="11.6" height="1.4" fill="#000080"/><rect x="0" y="15" width="11.6" height="1" fill="#000"/><circle cx="5.8" cy="5.2" r="4" fill="#c6c6c6" stroke="#000" stroke-width="1.3"/><ellipse cx="5.8" cy="1.9" rx="2.4" ry="1.2" fill="#fff" stroke="#000" stroke-width="0.7"/><path d="M2.3 3.6 Q5.8 2.6 9.3 3.6" stroke="#e8d820" stroke-width="1.2" fill="none"/><path d="M4 5.8 L5.5 7.6 L8 4.4" stroke="#f4e820" stroke-width="1.1" fill="none"/></svg>
<div class="t" style="left:321px;top:182px;;letter-spacing:-0.333px">Adams, Philip</div>
<div class="t" style="left:644px;top:182px;;letter-spacing:0.0px">Justus Software</div>
<svg style="left:284px;top:200px" width="12" height="15" viewBox="0 0 12 16" preserveAspectRatio="none"><path d="M0.5 14.2 L0.5 12.5 Q0.8 10 3.3 9.5 L8.2 9.5 Q10.7 10 11 12.5 L11 14.2 Z" fill="#1838a8" stroke="#000" stroke-width="0.9"/><path d="M4 9.6 L7.5 9.6 L6.9 13.6 L4.6 13.6 Z" fill="#fff"/><path d="M2.6 10.6 L4.4 13.2 M8.9 10.6 L7.1 13.2" stroke="#18a0a0" stroke-width="1.2" fill="none"/><rect x="0" y="13.6" width="11.6" height="1.4" fill="#000080"/><rect x="0" y="15" width="11.6" height="1" fill="#000"/><circle cx="5.8" cy="5.2" r="4" fill="#c6c6c6" stroke="#000" stroke-width="1.3"/><ellipse cx="5.8" cy="1.9" rx="2.4" ry="1.2" fill="#fff" stroke="#000" stroke-width="0.7"/><path d="M2.3 3.6 Q5.8 2.6 9.3 3.6" stroke="#e8d820" stroke-width="1.2" fill="none"/><path d="M4 5.8 L5.5 7.6 L8 4.4" stroke="#f4e820" stroke-width="1.1" fill="none"/></svg>
<div class="t" style="left:321px;top:200px;;letter-spacing:-0.067px">Alexander, James</div>
<div class="t" style="left:644px;top:200px;;letter-spacing:-0.15px">Union Chemicals, Inc.</div>
<svg style="left:284px;top:218px" width="12" height="15" viewBox="0 0 12 16" preserveAspectRatio="none"><path d="M0.5 14.2 L0.5 12.5 Q0.8 10 3.3 9.5 L8.2 9.5 Q10.7 10 11 12.5 L11 14.2 Z" fill="#1838a8" stroke="#000" stroke-width="0.9"/><path d="M4 9.6 L7.5 9.6 L6.9 13.6 L4.6 13.6 Z" fill="#fff"/><path d="M2.6 10.6 L4.4 13.2 M8.9 10.6 L7.1 13.2" stroke="#18a0a0" stroke-width="1.2" fill="none"/><rect x="0" y="13.6" width="11.6" height="1.4" fill="#000080"/><rect x="0" y="15" width="11.6" height="1" fill="#000"/><circle cx="5.8" cy="5.2" r="4" fill="#c6c6c6" stroke="#000" stroke-width="1.3"/><ellipse cx="5.8" cy="1.9" rx="2.4" ry="1.2" fill="#fff" stroke="#000" stroke-width="0.7"/><path d="M2.3 3.6 Q5.8 2.6 9.3 3.6" stroke="#e8d820" stroke-width="1.2" fill="none"/><path d="M4 5.8 L5.5 7.6 L8 4.4" stroke="#f4e820" stroke-width="1.1" fill="none"/></svg>
<div class="t" style="left:321px;top:218px;;letter-spacing:-0.182px">Allain, Neil</div>
<div class="t" style="left:644px;top:218px;;letter-spacing:0.176px">Crawford &amp; Iverson</div>
<svg style="left:284px;top:236px" width="12" height="15" viewBox="0 0 12 16" preserveAspectRatio="none"><path d="M0.5 14.2 L0.5 12.5 Q0.8 10 3.3 9.5 L8.2 9.5 Q10.7 10 11 12.5 L11 14.2 Z" fill="#1838a8" stroke="#000" stroke-width="0.9"/><path d="M4 9.6 L7.5 9.6 L6.9 13.6 L4.6 13.6 Z" fill="#fff"/><path d="M2.6 10.6 L4.4 13.2 M8.9 10.6 L7.1 13.2" stroke="#18a0a0" stroke-width="1.2" fill="none"/><rect x="0" y="13.6" width="11.6" height="1.4" fill="#000080"/><rect x="0" y="15" width="11.6" height="1" fill="#000"/><circle cx="5.8" cy="5.2" r="4" fill="#c6c6c6" stroke="#000" stroke-width="1.3"/><ellipse cx="5.8" cy="1.9" rx="2.4" ry="1.2" fill="#fff" stroke="#000" stroke-width="0.7"/><path d="M2.3 3.6 Q5.8 2.6 9.3 3.6" stroke="#e8d820" stroke-width="1.2" fill="none"/><path d="M4 5.8 L5.5 7.6 L8 4.4" stroke="#f4e820" stroke-width="1.1" fill="none"/></svg>
<div class="t" style="left:321px;top:236px;;letter-spacing:-0.1px">Allen, Robb</div>
<div class="t" style="left:644px;top:236px;;letter-spacing:0.176px">Crawford &amp; Iverson</div>
<svg style="left:284px;top:254px" width="12" height="15" viewBox="0 0 12 16" preserveAspectRatio="none"><path d="M0.5 14.2 L0.5 12.5 Q0.8 10 3.3 9.5 L8.2 9.5 Q10.7 10 11 12.5 L11 14.2 Z" fill="#1838a8" stroke="#000" stroke-width="0.9"/><path d="M4 9.6 L7.5 9.6 L6.9 13.6 L4.6 13.6 Z" fill="#fff"/><path d="M2.6 10.6 L4.4 13.2 M8.9 10.6 L7.1 13.2" stroke="#18a0a0" stroke-width="1.2" fill="none"/><rect x="0" y="13.6" width="11.6" height="1.4" fill="#000080"/><rect x="0" y="15" width="11.6" height="1" fill="#000"/><circle cx="5.8" cy="5.2" r="4" fill="#c6c6c6" stroke="#000" stroke-width="1.3"/><ellipse cx="5.8" cy="1.9" rx="2.4" ry="1.2" fill="#fff" stroke="#000" stroke-width="0.7"/><path d="M2.3 3.6 Q5.8 2.6 9.3 3.6" stroke="#e8d820" stroke-width="1.2" fill="none"/><path d="M4 5.8 L5.5 7.6 L8 4.4" stroke="#f4e820" stroke-width="1.1" fill="none"/></svg>
<div class="t" style="left:321px;top:254px;;letter-spacing:-0.111px">Anderson, John Esq.</div>
<div class="t" style="left:644px;top:254px;;letter-spacing:-0.229px">Jamison, Luhrman, Colson and Gossard</div>
<svg style="left:284px;top:272px" width="12" height="15" viewBox="0 0 12 16" preserveAspectRatio="none"><path d="M0.5 14.2 L0.5 12.5 Q0.8 10 3.3 9.5 L8.2 9.5 Q10.7 10 11 12.5 L11 14.2 Z" fill="#1838a8" stroke="#000" stroke-width="0.9"/><path d="M4 9.6 L7.5 9.6 L6.9 13.6 L4.6 13.6 Z" fill="#fff"/><path d="M2.6 10.6 L4.4 13.2 M8.9 10.6 L7.1 13.2" stroke="#18a0a0" stroke-width="1.2" fill="none"/><rect x="0" y="13.6" width="11.6" height="1.4" fill="#000080"/><rect x="0" y="15" width="11.6" height="1" fill="#000"/><circle cx="5.8" cy="5.2" r="4" fill="#c6c6c6" stroke="#000" stroke-width="1.3"/><ellipse cx="5.8" cy="1.9" rx="2.4" ry="1.2" fill="#fff" stroke="#000" stroke-width="0.7"/><path d="M2.3 3.6 Q5.8 2.6 9.3 3.6" stroke="#e8d820" stroke-width="1.2" fill="none"/><path d="M4 5.8 L5.5 7.6 L8 4.4" stroke="#f4e820" stroke-width="1.1" fill="none"/></svg>
<div class="t" style="left:321px;top:272px;;letter-spacing:-0.133px">Banks, Josephine</div>
<div class="t" style="left:644px;top:272px;;letter-spacing:0.261px">Interface Software, Inc.</div>
<svg style="left:284px;top:290px" width="12" height="15" viewBox="0 0 12 16" preserveAspectRatio="none"><path d="M0.5 14.2 L0.5 12.5 Q0.8 10 3.3 9.5 L8.2 9.5 Q10.7 10 11 12.5 L11 14.2 Z" fill="#1838a8" stroke="#000" stroke-width="0.9"/><path d="M4 9.6 L7.5 9.6 L6.9 13.6 L4.6 13.6 Z" fill="#fff"/><path d="M2.6 10.6 L4.4 13.2 M8.9 10.6 L7.1 13.2" stroke="#18a0a0" stroke-width="1.2" fill="none"/><rect x="0" y="13.6" width="11.6" height="1.4" fill="#000080"/><rect x="0" y="15" width="11.6" height="1" fill="#000"/><circle cx="5.8" cy="5.2" r="4" fill="#c6c6c6" stroke="#000" stroke-width="1.3"/><ellipse cx="5.8" cy="1.9" rx="2.4" ry="1.2" fill="#fff" stroke="#000" stroke-width="0.7"/><path d="M2.3 3.6 Q5.8 2.6 9.3 3.6" stroke="#e8d820" stroke-width="1.2" fill="none"/><path d="M4 5.8 L5.5 7.6 L8 4.4" stroke="#f4e820" stroke-width="1.1" fill="none"/></svg>
<div class="t" style="left:321px;top:290px;;letter-spacing:0.083px">Baron, Robert</div>
<div class="t" style="left:644px;top:290px;;letter-spacing:0.176px">Crawford &amp; Iverson</div>
<svg style="left:284px;top:308px" width="12" height="15" viewBox="0 0 12 16" preserveAspectRatio="none"><path d="M0.5 14.2 L0.5 12.5 Q0.8 10 3.3 9.5 L8.2 9.5 Q10.7 10 11 12.5 L11 14.2 Z" fill="#1838a8" stroke="#000" stroke-width="0.9"/><path d="M4 9.6 L7.5 9.6 L6.9 13.6 L4.6 13.6 Z" fill="#fff"/><path d="M2.6 10.6 L4.4 13.2 M8.9 10.6 L7.1 13.2" stroke="#18a0a0" stroke-width="1.2" fill="none"/><rect x="0" y="13.6" width="11.6" height="1.4" fill="#000080"/><rect x="0" y="15" width="11.6" height="1" fill="#000"/><circle cx="5.8" cy="5.2" r="4" fill="#c6c6c6" stroke="#000" stroke-width="1.3"/><ellipse cx="5.8" cy="1.9" rx="2.4" ry="1.2" fill="#fff" stroke="#000" stroke-width="0.7"/><path d="M2.3 3.6 Q5.8 2.6 9.3 3.6" stroke="#e8d820" stroke-width="1.2" fill="none"/><path d="M4 5.8 L5.5 7.6 L8 4.4" stroke="#f4e820" stroke-width="1.1" fill="none"/></svg>
<div class="t" style="left:321px;top:308px;;letter-spacing:-0.062px">Benson, Alexandra</div>
<div class="t" style="left:644px;top:308px;;letter-spacing:0.0px">Justus Software</div>
<svg style="left:284px;top:326px" width="12" height="15" viewBox="0 0 12 16" preserveAspectRatio="none"><path d="M0.5 14.2 L0.5 12.5 Q0.8 10 3.3 9.5 L8.2 9.5 Q10.7 10 11 12.5 L11 14.2 Z" fill="#1838a8" stroke="#000" stroke-width="0.9"/><path d="M4 9.6 L7.5 9.6 L6.9 13.6 L4.6 13.6 Z" fill="#fff"/><path d="M2.6 10.6 L4.4 13.2 M8.9 10.6 L7.1 13.2" stroke="#18a0a0" stroke-width="1.2" fill="none"/><rect x="0" y="13.6" width="11.6" height="1.4" fill="#000080"/><rect x="0" y="15" width="11.6" height="1" fill="#000"/><circle cx="5.8" cy="5.2" r="4" fill="#c6c6c6" stroke="#000" stroke-width="1.3"/><ellipse cx="5.8" cy="1.9" rx="2.4" ry="1.2" fill="#fff" stroke="#000" stroke-width="0.7"/><path d="M2.3 3.6 Q5.8 2.6 9.3 3.6" stroke="#e8d820" stroke-width="1.2" fill="none"/><path d="M4 5.8 L5.5 7.6 L8 4.4" stroke="#f4e820" stroke-width="1.1" fill="none"/></svg>
<div class="t" style="left:321px;top:326px;;letter-spacing:-0.143px">Benson, Douglas</div>
<div class="t" style="left:644px;top:326px;;letter-spacing:-0.261px">Goldberg Adams &amp; Company</div>
<svg style="left:284px;top:344px" width="12" height="15" viewBox="0 0 12 16" preserveAspectRatio="none"><path d="M0.5 14.2 L0.5 12.5 Q0.8 10 3.3 9.5 L8.2 9.5 Q10.7 10 11 12.5 L11 14.2 Z" fill="#1838a8" stroke="#000" stroke-width="0.9"/><path d="M4 9.6 L7.5 9.6 L6.9 13.6 L4.6 13.6 Z" fill="#fff"/><path d="M2.6 10.6 L4.4 13.2 M8.9 10.6 L7.1 13.2" stroke="#18a0a0" stroke-width="1.2" fill="none"/><rect x="0" y="13.6" width="11.6" height="1.4" fill="#000080"/><rect x="0" y="15" width="11.6" height="1" fill="#000"/><circle cx="5.8" cy="5.2" r="4" fill="#c6c6c6" stroke="#000" stroke-width="1.3"/><ellipse cx="5.8" cy="1.9" rx="2.4" ry="1.2" fill="#fff" stroke="#000" stroke-width="0.7"/><path d="M2.3 3.6 Q5.8 2.6 9.3 3.6" stroke="#e8d820" stroke-width="1.2" fill="none"/><path d="M4 5.8 L5.5 7.6 L8 4.4" stroke="#f4e820" stroke-width="1.1" fill="none"/></svg>
<div class="t" style="left:321px;top:344px;;letter-spacing:-0.077px">Bergur, Sheila</div>
<div class="t" style="left:644px;top:344px;;letter-spacing:0.0px">Justus Software</div>
<svg style="left:284px;top:362px" width="12" height="15" viewBox="0 0 12 16" preserveAspectRatio="none"><path d="M0.5 14.2 L0.5 12.5 Q0.8 10 3.3 9.5 L8.2 9.5 Q10.7 10 11 12.5 L11 14.2 Z" fill="#1838a8" stroke="#000" stroke-width="0.9"/><path d="M4 9.6 L7.5 9.6 L6.9 13.6 L4.6 13.6 Z" fill="#fff"/><path d="M2.6 10.6 L4.4 13.2 M8.9 10.6 L7.1 13.2" stroke="#18a0a0" stroke-width="1.2" fill="none"/><rect x="0" y="13.6" width="11.6" height="1.4" fill="#000080"/><rect x="0" y="15" width="11.6" height="1" fill="#000"/><circle cx="5.8" cy="5.2" r="4" fill="#c6c6c6" stroke="#000" stroke-width="1.3"/><ellipse cx="5.8" cy="1.9" rx="2.4" ry="1.2" fill="#fff" stroke="#000" stroke-width="0.7"/><path d="M2.3 3.6 Q5.8 2.6 9.3 3.6" stroke="#e8d820" stroke-width="1.2" fill="none"/><path d="M4 5.8 L5.5 7.6 L8 4.4" stroke="#f4e820" stroke-width="1.1" fill="none"/></svg>
<div class="t" style="left:321px;top:362px;;letter-spacing:0.286px">Bittar, Walfrid</div>
<div class="t" style="left:644px;top:362px;;letter-spacing:-0.222px">ACME, Inc.</div>
<svg style="left:284px;top:380px" width="12" height="15" viewBox="0 0 12 16" preserveAspectRatio="none"><path d="M0.5 14.2 L0.5 12.5 Q0.8 10 3.3 9.5 L8.2 9.5 Q10.7 10 11 12.5 L11 14.2 Z" fill="#1838a8" stroke="#000" stroke-width="0.9"/><path d="M4 9.6 L7.5 9.6 L6.9 13.6 L4.6 13.6 Z" fill="#fff"/><path d="M2.6 10.6 L4.4 13.2 M8.9 10.6 L7.1 13.2" stroke="#18a0a0" stroke-width="1.2" fill="none"/><rect x="0" y="13.6" width="11.6" height="1.4" fill="#000080"/><rect x="0" y="15" width="11.6" height="1" fill="#000"/><circle cx="5.8" cy="5.2" r="4" fill="#c6c6c6" stroke="#000" stroke-width="1.3"/><ellipse cx="5.8" cy="1.9" rx="2.4" ry="1.2" fill="#fff" stroke="#000" stroke-width="0.7"/><path d="M2.3 3.6 Q5.8 2.6 9.3 3.6" stroke="#e8d820" stroke-width="1.2" fill="none"/><path d="M4 5.8 L5.5 7.6 L8 4.4" stroke="#f4e820" stroke-width="1.1" fill="none"/></svg>
<div class="t" style="left:321px;top:380px;;letter-spacing:-0.273px">Bloom, Erica</div>
<div class="t" style="left:644px;top:380px;;letter-spacing:-0.062px">Manny Enterprises</div>
<svg style="left:284px;top:398px" width="12" height="15" viewBox="0 0 12 16" preserveAspectRatio="none"><path d="M0.5 14.2 L0.5 12.5 Q0.8 10 3.3 9.5 L8.2 9.5 Q10.7 10 11 12.5 L11 14.2 Z" fill="#1838a8" stroke="#000" stroke-width="0.9"/><path d="M4 9.6 L7.5 9.6 L6.9 13.6 L4.6 13.6 Z" fill="#fff"/><path d="M2.6 10.6 L4.4 13.2 M8.9 10.6 L7.1 13.2" stroke="#18a0a0" stroke-width="1.2" fill="none"/><rect x="0" y="13.6" width="11.6" height="1.4" fill="#000080"/><rect x="0" y="15" width="11.6" height="1" fill="#000"/><circle cx="5.8" cy="5.2" r="4" fill="#c6c6c6" stroke="#000" stroke-width="1.3"/><ellipse cx="5.8" cy="1.9" rx="2.4" ry="1.2" fill="#fff" stroke="#000" stroke-width="0.7"/><path d="M2.3 3.6 Q5.8 2.6 9.3 3.6" stroke="#e8d820" stroke-width="1.2" fill="none"/><path d="M4 5.8 L5.5 7.6 L8 4.4" stroke="#f4e820" stroke-width="1.1" fill="none"/></svg>
<div class="t" style="left:321px;top:398px;;letter-spacing:-0.062px">Bouchard, Deborah</div>
<div class="t" style="left:644px;top:398px;;letter-spacing:0.0px">Dharma Industries</div>
<svg style="left:284px;top:416px" width="12" height="15" viewBox="0 0 12 16" preserveAspectRatio="none"><path d="M0.5 14.2 L0.5 12.5 Q0.8 10 3.3 9.5 L8.2 9.5 Q10.7 10 11 12.5 L11 14.2 Z" fill="#1838a8" stroke="#000" stroke-width="0.9"/><path d="M4 9.6 L7.5 9.6 L6.9 13.6 L4.6 13.6 Z" fill="#fff"/><path d="M2.6 10.6 L4.4 13.2 M8.9 10.6 L7.1 13.2" stroke="#18a0a0" stroke-width="1.2" fill="none"/><rect x="0" y="13.6" width="11.6" height="1.4" fill="#000080"/><rect x="0" y="15" width="11.6" height="1" fill="#000"/><circle cx="5.8" cy="5.2" r="4" fill="#c6c6c6" stroke="#000" stroke-width="1.3"/><ellipse cx="5.8" cy="1.9" rx="2.4" ry="1.2" fill="#fff" stroke="#000" stroke-width="0.7"/><path d="M2.3 3.6 Q5.8 2.6 9.3 3.6" stroke="#e8d820" stroke-width="1.2" fill="none"/><path d="M4 5.8 L5.5 7.6 L8 4.4" stroke="#f4e820" stroke-width="1.1" fill="none"/></svg>
<div class="t" style="left:321px;top:416px;;letter-spacing:0.0px">Bové, Gregory</div>
<div class="t" style="left:644px;top:416px;;letter-spacing:-0.185px">TeleNorth Financial Services</div>
<svg style="left:284px;top:434px" width="12" height="15" viewBox="0 0 12 16" preserveAspectRatio="none"><path d="M0.5 14.2 L0.5 12.5 Q0.8 10 3.3 9.5 L8.2 9.5 Q10.7 10 11 12.5 L11 14.2 Z" fill="#1838a8" stroke="#000" stroke-width="0.9"/><path d="M4 9.6 L7.5 9.6 L6.9 13.6 L4.6 13.6 Z" fill="#fff"/><path d="M2.6 10.6 L4.4 13.2 M8.9 10.6 L7.1 13.2" stroke="#18a0a0" stroke-width="1.2" fill="none"/><rect x="0" y="13.6" width="11.6" height="1.4" fill="#000080"/><rect x="0" y="15" width="11.6" height="1" fill="#000"/><circle cx="5.8" cy="5.2" r="4" fill="#c6c6c6" stroke="#000" stroke-width="1.3"/><ellipse cx="5.8" cy="1.9" rx="2.4" ry="1.2" fill="#fff" stroke="#000" stroke-width="0.7"/><path d="M2.3 3.6 Q5.8 2.6 9.3 3.6" stroke="#e8d820" stroke-width="1.2" fill="none"/><path d="M4 5.8 L5.5 7.6 L8 4.4" stroke="#f4e820" stroke-width="1.1" fill="none"/></svg>
<div class="t" style="left:321px;top:434px;;letter-spacing:0.2px">Britz, Andy</div>
<div class="t" style="left:644px;top:434px;;letter-spacing:-0.222px">ACME, Inc.</div>
<svg style="left:284px;top:452px" width="12" height="15" viewBox="0 0 12 16" preserveAspectRatio="none"><path d="M0.5 14.2 L0.5 12.5 Q0.8 10 3.3 9.5 L8.2 9.5 Q10.7 10 11 12.5 L11 14.2 Z" fill="#1838a8" stroke="#000" stroke-width="0.9"/><path d="M4 9.6 L7.5 9.6 L6.9 13.6 L4.6 13.6 Z" fill="#fff"/><path d="M2.6 10.6 L4.4 13.2 M8.9 10.6 L7.1 13.2" stroke="#18a0a0" stroke-width="1.2" fill="none"/><rect x="0" y="13.6" width="11.6" height="1.4" fill="#000080"/><rect x="0" y="15" width="11.6" height="1" fill="#000"/><circle cx="5.8" cy="5.2" r="4" fill="#c6c6c6" stroke="#000" stroke-width="1.3"/><ellipse cx="5.8" cy="1.9" rx="2.4" ry="1.2" fill="#fff" stroke="#000" stroke-width="0.7"/><path d="M2.3 3.6 Q5.8 2.6 9.3 3.6" stroke="#e8d820" stroke-width="1.2" fill="none"/><path d="M4 5.8 L5.5 7.6 L8 4.4" stroke="#f4e820" stroke-width="1.1" fill="none"/></svg>
<div class="t" style="left:321px;top:452px;;letter-spacing:0.091px">Buckley, Ann</div>
<div class="t" style="left:644px;top:452px;;letter-spacing:-0.3px">McKormic and Robinson</div>
<svg style="left:284px;top:470px" width="12" height="15" viewBox="0 0 12 16" preserveAspectRatio="none"><path d="M0.5 14.2 L0.5 12.5 Q0.8 10 3.3 9.5 L8.2 9.5 Q10.7 10 11 12.5 L11 14.2 Z" fill="#1838a8" stroke="#000" stroke-width="0.9"/><path d="M4 9.6 L7.5 9.6 L6.9 13.6 L4.6 13.6 Z" fill="#fff"/><path d="M2.6 10.6 L4.4 13.2 M8.9 10.6 L7.1 13.2" stroke="#18a0a0" stroke-width="1.2" fill="none"/><rect x="0" y="13.6" width="11.6" height="1.4" fill="#000080"/><rect x="0" y="15" width="11.6" height="1" fill="#000"/><circle cx="5.8" cy="5.2" r="4" fill="#c6c6c6" stroke="#000" stroke-width="1.3"/><ellipse cx="5.8" cy="1.9" rx="2.4" ry="1.2" fill="#fff" stroke="#000" stroke-width="0.7"/><path d="M2.3 3.6 Q5.8 2.6 9.3 3.6" stroke="#e8d820" stroke-width="1.2" fill="none"/><path d="M4 5.8 L5.5 7.6 L8 4.4" stroke="#f4e820" stroke-width="1.1" fill="none"/></svg>
<div class="t" style="left:321px;top:470px;;letter-spacing:-0.25px">Busche, James</div>
<div class="t" style="left:644px;top:470px;;letter-spacing:-0.222px">ACME, Inc.</div>
<svg style="left:284px;top:488px" width="12" height="15" viewBox="0 0 12 16" preserveAspectRatio="none"><path d="M0.5 14.2 L0.5 12.5 Q0.8 10 3.3 9.5 L8.2 9.5 Q10.7 10 11 12.5 L11 14.2 Z" fill="#1838a8" stroke="#000" stroke-width="0.9"/><path d="M4 9.6 L7.5 9.6 L6.9 13.6 L4.6 13.6 Z" fill="#fff"/><path d="M2.6 10.6 L4.4 13.2 M8.9 10.6 L7.1 13.2" stroke="#18a0a0" stroke-width="1.2" fill="none"/><rect x="0" y="13.6" width="11.6" height="1.4" fill="#000080"/><rect x="0" y="15" width="11.6" height="1" fill="#000"/><circle cx="5.8" cy="5.2" r="4" fill="#c6c6c6" stroke="#000" stroke-width="1.3"/><ellipse cx="5.8" cy="1.9" rx="2.4" ry="1.2" fill="#fff" stroke="#000" stroke-width="0.7"/><path d="M2.3 3.6 Q5.8 2.6 9.3 3.6" stroke="#e8d820" stroke-width="1.2" fill="none"/><path d="M4 5.8 L5.5 7.6 L8 4.4" stroke="#f4e820" stroke-width="1.1" fill="none"/></svg>
<div class="t" style="left:321px;top:488px;;letter-spacing:-0.067px">Castanza, Manuel</div>
<div class="t" style="left:644px;top:488px;;letter-spacing:-0.172px">Central Alliance Communication</div>
<svg style="left:284px;top:506px" width="12" height="15" viewBox="0 0 12 16" preserveAspectRatio="none"><path d="M0.5 14.2 L0.5 12.5 Q0.8 10 3.3 9.5 L8.2 9.5 Q10.7 10 11 12.5 L11 14.2 Z" fill="#1838a8" stroke="#000" stroke-width="0.9"/><path d="M4 9.6 L7.5 9.6 L6.9 13.6 L4.6 13.6 Z" fill="#fff"/><path d="M2.6 10.6 L4.4 13.2 M8.9 10.6 L7.1 13.2" stroke="#18a0a0" stroke-width="1.2" fill="none"/><rect x="0" y="13.6" width="11.6" height="1.4" fill="#000080"/><rect x="0" y="15" width="11.6" height="1" fill="#000"/><circle cx="5.8" cy="5.2" r="4" fill="#c6c6c6" stroke="#000" stroke-width="1.3"/><ellipse cx="5.8" cy="1.9" rx="2.4" ry="1.2" fill="#fff" stroke="#000" stroke-width="0.7"/><path d="M2.3 3.6 Q5.8 2.6 9.3 3.6" stroke="#e8d820" stroke-width="1.2" fill="none"/><path d="M4 5.8 L5.5 7.6 L8 4.4" stroke="#f4e820" stroke-width="1.1" fill="none"/></svg>
<div class="t" style="left:321px;top:506px;;letter-spacing:0.0px">Church, Catherine</div>
<div class="t" style="left:644px;top:506px;;letter-spacing:0.176px">Crawford &amp; Iverson</div>
<svg style="left:284px;top:524px" width="12" height="15" viewBox="0 0 12 16" preserveAspectRatio="none"><path d="M0.5 14.2 L0.5 12.5 Q0.8 10 3.3 9.5 L8.2 9.5 Q10.7 10 11 12.5 L11 14.2 Z" fill="#1838a8" stroke="#000" stroke-width="0.9"/><path d="M4 9.6 L7.5 9.6 L6.9 13.6 L4.6 13.6 Z" fill="#fff"/><path d="M2.6 10.6 L4.4 13.2 M8.9 10.6 L7.1 13.2" stroke="#18a0a0" stroke-width="1.2" fill="none"/><rect x="0" y="13.6" width="11.6" height="1.4" fill="#000080"/><rect x="0" y="15" width="11.6" height="1" fill="#000"/><circle cx="5.8" cy="5.2" r="4" fill="#c6c6c6" stroke="#000" stroke-width="1.3"/><ellipse cx="5.8" cy="1.9" rx="2.4" ry="1.2" fill="#fff" stroke="#000" stroke-width="0.7"/><path d="M2.3 3.6 Q5.8 2.6 9.3 3.6" stroke="#e8d820" stroke-width="1.2" fill="none"/><path d="M4 5.8 L5.5 7.6 L8 4.4" stroke="#f4e820" stroke-width="1.1" fill="none"/></svg>
<div class="t" style="left:321px;top:524px;;letter-spacing:-0.2px">Collins, Hillary</div>
<div class="t" style="left:644px;top:524px;;letter-spacing:-0.062px">Manny Enterprises</div>
<div class="sb" style="left:967px;top:145px;width:16px;height:395px"></div>
<div class="sbtn" style="left:967px;top:145px;width:16px;height:16px"><svg style="left:3px;top:5px" width="7" height="4" viewBox="0 0 7 4"><path d="M0 4 L7 4 L3.5 0 Z" fill="#000"/></svg></div>
<div class="sbtn" style="left:967px;top:163px;width:16px;height:42px"></div>
<div class="sbtn" style="left:967px;top:524px;width:16px;height:16px"><svg style="left:3px;top:5px" width="7" height="4" viewBox="0 0 7 4"><path d="M0 0 L7 0 L3.5 4 Z" fill="#000"/></svg></div>
<div class="ab" style="left:989px;top:147px;width:26px;height:17px;border:1px solid;border-color:#404040 #fff #fff #404040;box-shadow:inset 1px 1px 0 #808080;background:#dcd9d2;text-align:center;font-size:11px;line-height:16px;letter-spacing:0">ALL</div>
<div class="ib" style="left:989px;top:168px;width:26px;height:17px;font-size:11px;line-height:14px;letter-spacing:0">123</div>
<div class="ib" style="left:989px;top:186px;width:26px;height:17px;font-size:11px;line-height:14px;letter-spacing:0">ab</div>
<div class="ib" style="left:989px;top:204px;width:26px;height:17px;font-size:11px;line-height:14px;letter-spacing:0">c</div>
<div class="ib" style="left:989px;top:222px;width:26px;height:17px;font-size:11px;line-height:14px;letter-spacing:0">d</div>
<div class="ib" style="left:989px;top:240px;width:26px;height:17px;font-size:11px;line-height:14px;letter-spacing:0">ef</div>
<div class="ib" style="left:989px;top:258px;width:26px;height:17px;font-size:11px;line-height:14px;letter-spacing:0">gh</div>
<div class="ib" style="left:989px;top:276px;width:26px;height:17px;font-size:11px;line-height:14px;letter-spacing:0">ij</div>
<div class="ib" style="left:989px;top:294px;width:26px;height:17px;font-size:11px;line-height:14px;letter-spacing:0">kl</div>
<div class="ib" style="left:989px;top:312px;width:26px;height:17px;font-size:11px;line-height:14px;letter-spacing:0">m</div>
<div class="ib" style="left:989px;top:330px;width:26px;height:17px;font-size:11px;line-height:14px;letter-spacing:0">no</div>
<div class="ib" style="left:989px;top:348px;width:26px;height:17px;font-size:11px;line-height:14px;letter-spacing:0">pq</div>
<div class="ib" style="left:989px;top:366px;width:26px;height:17px;font-size:11px;line-height:14px;letter-spacing:0">r</div>
<div class="ib" style="left:989px;top:384px;width:26px;height:17px;font-size:11px;line-height:14px;letter-spacing:0">s</div>
<div class="ib" style="left:989px;top:402px;width:26px;height:17px;font-size:11px;line-height:14px;letter-spacing:0">t</div>
<div class="ib" style="left:989px;top:420px;width:26px;height:17px;font-size:11px;line-height:14px;letter-spacing:0">uv</div>
<div class="ib" style="left:989px;top:438px;width:26px;height:17px;font-size:11px;line-height:14px;letter-spacing:0">wx</div>
<div class="ib" style="left:989px;top:456px;width:26px;height:17px;font-size:11px;line-height:14px;letter-spacing:0">yz</div>
<div class="lab" style="left:986px;top:479px">G</div>
<div class="lab" style="left:528px;top:245px">C</div>
<div class="t" style="left:270px;top:544px;font-weight:bold;font-size:12px;line-height:14px;height:14px;letter-spacing:-0.35px;-webkit-text-stroke:0.3px #000">James Adams</div>
<svg style="left:272px;top:574px" width="16" height="11" viewBox="0 0 16 11"><rect x="0.5" y="0.5" width="15" height="10" fill="#f4f6ff" stroke="#334" stroke-width="1"/><rect x="3" y="4" width="8" height="1" fill="#557"/><rect x="3" y="6" width="6" height="1" fill="#557"/><rect x="12" y="2" width="2" height="2" fill="#557"/></svg>
<div class="t" style="left:295px;top:573px;font-size:11px;line-height:13px;height:13px;letter-spacing:-0.17px;transform:scaleY(1.12);transform-origin:0 10.3px">Vice President of Finance</div>
<div class="t" style="left:295px;top:586px;font-size:11px;line-height:13px;height:13px;letter-spacing:-0.17px;transform:scaleY(1.12);transform-origin:0 10.3px">Union Chemicals, Inc.</div>
<div class="t" style="left:295px;top:599px;font-size:11px;line-height:13px;height:13px;letter-spacing:-0.17px;transform:scaleY(1.12);transform-origin:0 10.3px">1422 W. North Avenue</div>
<div class="t" style="left:295px;top:612px;font-size:11px;line-height:13px;height:13px;letter-spacing:-0.17px;transform:scaleY(1.12);transform-origin:0 10.3px">New York NY 21200</div>
<div class="btn" style="left:272px;top:678px;width:15px;height:15px"><svg style="left:2px;top:4px" width="8" height="4" viewBox="0 0 8 4"><path d="M0 4 L8 4 L4 0 Z" fill="#808080"/></svg></div>
<div class="btn" style="left:288px;top:678px;width:15px;height:15px"><svg style="left:2px;top:4px" width="8" height="4" viewBox="0 0 8 4"><path d="M0 0 L8 0 L4 4 Z" fill="#808080"/></svg></div>
<div class="t" style="left:305px;top:679px;font-size:11px;letter-spacing:-0.4px;transform:scaleY(1.12);transform-origin:0 10.3px">Business</div>
<div class="lab" style="left:424px;top:581px">F</div>
<div class="ab" style="left:483px;top:544px;width:500px;height:150px;background:#fff;border:1px solid;border-color:#808080 #fff #fff #808080;box-shadow:inset 1px 1px 0 #404040"></div>
<div class="hdr" style="left:485px;top:546px;width:17px;height:17px"></div>
<div class="hdr" style="left:502px;top:546px;width:17px;height:17px"></div>
<div class="hdr" style="left:519px;top:546px;width:92px;height:17px"></div>
<div class="t" style="left:522px;top:548px;;letter-spacing:0.0px">Type</div>
<div class="hdr" style="left:611px;top:546px;width:293px;height:17px"></div>
<div class="t" style="left:614px;top:548px;;letter-spacing:-0.133px">Number / Address</div>
<div class="hdr" style="left:904px;top:546px;width:78px;height:17px"></div>
<div class="t" style="left:907px;top:548px;;letter-spacing:0.0px">Description</div>
<svg style="left:565px;top:550px" width="9" height="8" viewBox="0 0 9 8"><path d="M0.5 0.5 L8.5 0.5 L4.5 7.5 Z" fill="#d4d0c8" stroke="#808080" stroke-width="1"/><path d="M8.5 0.5 L4.5 7.5" fill="none" stroke="#fff" stroke-width="1"/></svg>
<svg style="left:485px;top:564px" width="17" height="18" viewBox="0 0 17 18"><path d="M1 8 L6 4.5 L15.5 8 L15.5 13 L10 17 L1 13 Z" fill="#c8c8c8" stroke="#222" stroke-width="1"/><path d="M1 8 L10 12 L15.5 8 M10 12 L10 17" fill="none" stroke="#444" stroke-width="0.8"/><path d="M2 5 Q2 1.5 6 1.5 L10 2.5 Q13.5 3.5 14 7 L11.5 7.5 Q11 5.5 9 5 L6.5 4.5 Q5 4.5 4.5 6 Z" fill="#e8e8e8" stroke="#222" stroke-width="1"/><path d="M5 9 l4 1.8 M6.5 8 l4 1.8 M4 10.5 l4 1.8" stroke="#666" stroke-width="0.9"/></svg>
<svg style="left:485px;top:584px" width="16" height="13" viewBox="0 0 16 13"><rect x="0.5" y="0.5" width="15" height="9.5" fill="#e8ecf8" stroke="#222" stroke-width="1"/><text x="8" y="8.6" font-family="Liberation Sans,sans-serif" font-size="9.5" font-weight="bold" fill="#00c" text-anchor="middle">@</text><path d="M0 12 H16" stroke="#00c" stroke-width="1" stroke-dasharray="1 1"/></svg>
<div class="t" style="left:520px;top:565px;;letter-spacing:-0.286px">Business</div>
<div class="t" style="left:613px;top:565px;;letter-spacing:0.0px">(212) 555-9876</div>
<div class="t" style="left:520px;top:583px;;letter-spacing:-0.286px">Business</div>
<div class="t" style="left:613px;top:583px;color:#00f;text-decoration:underline;letter-spacing:-0.348px">jadams@unionchemical.com</div>
<div class="sb" style="left:485px;top:677px;width:497px;height:16px"></div>
<div class="sbtn" style="left:485px;top:677px;width:16px;height:16px"><svg style="left:5px;top:3px" width="4" height="7" viewBox="0 0 4 7"><path d="M4 0 L4 7 L0 3.5 Z" fill="#000"/></svg></div>
<div class="sbtn" style="left:501px;top:677px;width:309px;height:16px"></div>
<div class="sbtn" style="left:966px;top:677px;width:16px;height:16px"><svg style="left:5px;top:3px" width="4" height="7" viewBox="0 0 4 7"><path d="M0 0 L0 7 L4 3.5 Z" fill="#000"/></svg></div>
<div class="hl w" style="left:263px;top:698px;width:761px"></div>
<div class="st" style="left:263px;top:701px;width:410px;height:16px;border-left:0"></div>
<div class="st" style="left:675px;top:701px;width:186px;height:16px"></div>
<div class="t" style="left:676px;top:703px;;letter-spacing:0.0px">iamatters</div>
<div class="st" style="left:863px;top:701px;width:160px;height:16px"></div>
<div class="t" style="left:864px;top:703px;;letter-spacing:-0.05px">2 of 172 &nbsp; (0 marked)</div>
<div class="hl" style="left:400px;top:722px;width:624px;background:#000"></div>
<div class="hl" style="left:264px;top:745px;width:137px;background:#000"></div>
<div class="t" style="left:286px;top:728px;font-size:11px;letter-spacing:-0.3px;transform:scaleY(1.12);transform-origin:0 10.3px">Firm Contacts - People</div>
<div class="lab" style="left:400px;top:720px;height:28px">E</div>
<div class="hl g" style="left:0;top:748px;width:1024px"></div><div class="hl w" style="left:0;top:749px;width:1024px"></div>
<div class="st" style="left:780px;top:752px;width:186px;height:15px"></div>
<div class="t" style="left:781px;top:753px;;letter-spacing:0.0px">Connected</div>
<div class="st" style="left:968px;top:752px;width:26px;height:15px"></div>
<div class="st" style="left:996px;top:752px;width:27px;height:15px"></div>
<div class="t" style="left:997px;top:753px;;letter-spacing:-1.0px">NUM</div>
</div></body></html>
